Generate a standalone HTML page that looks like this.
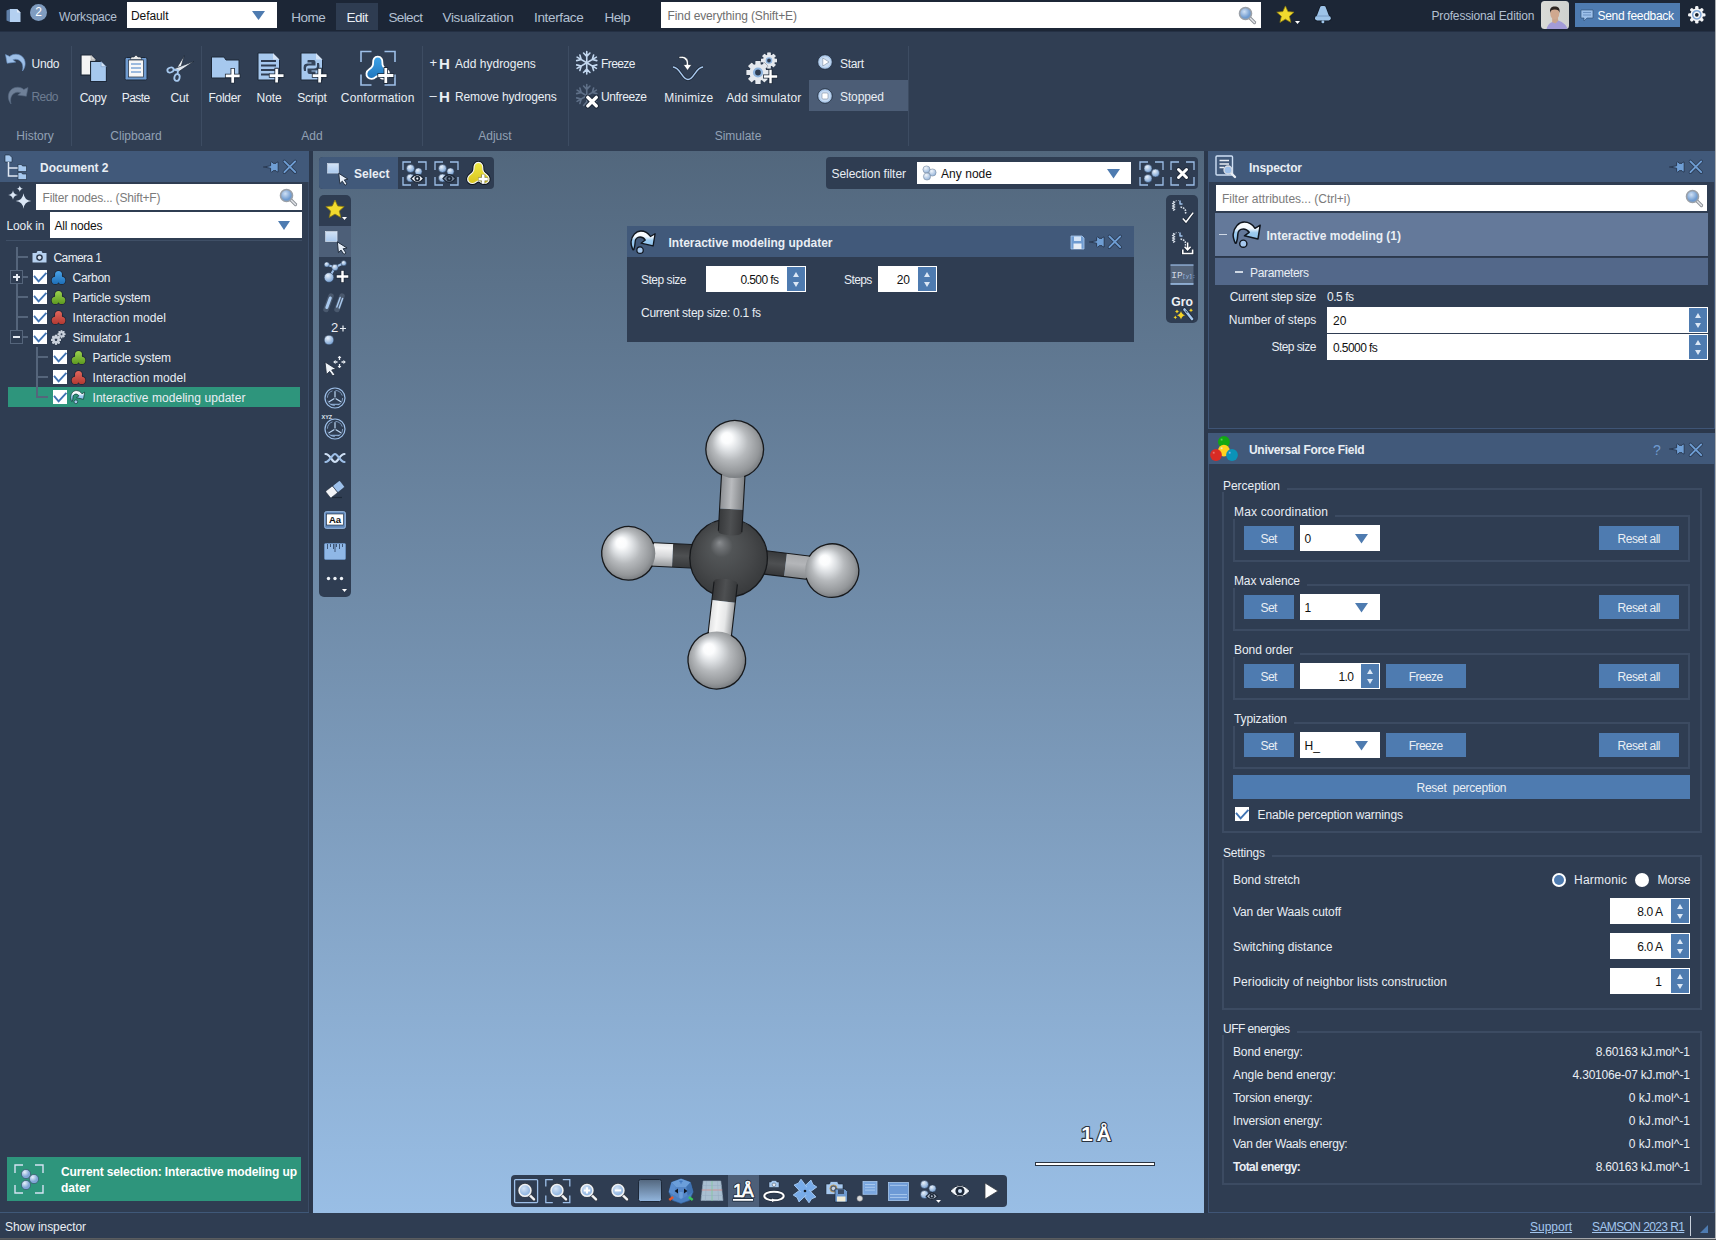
<!DOCTYPE html>
<html><head><meta charset="utf-8"><title>SAMSON</title><style>
*{margin:0;padding:0;box-sizing:border-box}
html,body{width:1716px;height:1240px;overflow:hidden;background:#2f3d52}
body{font-family:"Liberation Sans",sans-serif;font-size:12px;position:relative}
div,svg{position:absolute}
svg{overflow:visible}
</style></head><body>
<div style="left:0px;top:0px;width:1716px;height:31px;background:#1c2636;box-shadow:0 1px 1px #243044;"></div>
<svg style="left:6px;top:8px;" width="16" height="15" viewBox="0 0 16 15"><path d="M0.5 2.5 L4 1 L4 14 L0.5 12.5Z" fill="#5f7fa8"/><path d="M4 1 H11 L14.5 4.5 V14 H4Z" fill="#b4d0f0"/><path d="M11 1 V4.5 H14.5Z" fill="#dfeaf7"/></svg>
<div style="left:30px;top:3.6px;width:17px;height:17px;background:#7f9cc0;border-radius:50%;"></div>
<div style="left:35.16px;top:4.44px;line-height:16px;font-size:12px;color:#fff;white-space:pre;">2</div>
<div style="left:59.00px;top:8.94px;line-height:16px;font-size:12px;color:#b3c0d2;white-space:pre;letter-spacing:-0.225px;">Workspace</div>
<div style="left:127px;top:2px;width:150px;height:26px;background:#fff;"></div>
<div style="left:131.00px;top:8.44px;line-height:16px;font-size:12px;color:#111;white-space:pre;letter-spacing:-0.087px;">Default</div>
<svg style="left:252px;top:11px;" width="13" height="9" viewBox="0 0 13 9"><path d="M0 0 H13 L6.5 9Z" fill="#4e7bb0"/></svg>
<div style="left:336px;top:3px;width:42px;height:27px;background:#2e3c51;"></div>
<div style="left:291.30px;top:10.06px;line-height:16px;font-size:13.5px;color:#b3c0d2;white-space:pre;letter-spacing:-0.537px;">Home</div>
<div style="left:346.40px;top:10.06px;line-height:16px;font-size:13.5px;color:#e9eef4;white-space:pre;letter-spacing:-0.487px;">Edit</div>
<div style="left:388.40px;top:10.06px;line-height:16px;font-size:13.5px;color:#b3c0d2;white-space:pre;letter-spacing:-0.600px;">Select</div>
<div style="left:442.50px;top:10.06px;line-height:16px;font-size:13.5px;color:#b3c0d2;white-space:pre;letter-spacing:-0.354px;">Visualization</div>
<div style="left:534.10px;top:10.06px;line-height:16px;font-size:13.5px;color:#b3c0d2;white-space:pre;letter-spacing:-0.366px;">Interface</div>
<div style="left:604.50px;top:10.06px;line-height:16px;font-size:13.5px;color:#b3c0d2;white-space:pre;letter-spacing:-0.600px;">Help</div>
<div style="left:661px;top:2px;width:600px;height:26px;background:#fff;"></div>
<div style="left:667.60px;top:8.44px;line-height:16px;font-size:12px;color:#6f6f6f;white-space:pre;letter-spacing:-0.125px;">Find everything (Shift+E)</div>
<svg style="left:1238px;top:6px;" width="18" height="18" viewBox="0 0 18 18"><defs><radialGradient id="mg1238" cx="40%" cy="35%"><stop offset="0" stop-color="#cfe0f5"/><stop offset="1" stop-color="#6f9bd0"/></radialGradient></defs><path d="M11.5 11.5 L16.5 16.5" stroke="#8a8f96" stroke-width="3.2" stroke-linecap="round"/><path d="M11.5 11.5 L16.5 16.5" stroke="#e3e6ea" stroke-width="1.4" stroke-linecap="round"/><circle cx="7.5" cy="7.5" r="6" fill="url(#mg1238)" stroke="#9aa0a8" stroke-width="1.6"/></svg>
<svg style="left:1275.5px;top:4.9px;" width="18.8" height="18.8" viewBox="0 0 20 20"><path d="M10 1 L12.7 7 L19.2 7.6 L14.3 12 L15.8 18.5 L10 15.1 L4.2 18.5 L5.7 12 L0.8 7.6 L7.3 7Z" fill="#f1da2e" stroke="#8a7a10" stroke-width="0.8" stroke-linejoin="round"/></svg>
<svg style="left:1294.8px;top:20.8px;" width="5" height="3" viewBox="0 0 5 3"><path d="M0 0 H5 L2.5 3Z" fill="#fff"/></svg>
<svg style="left:1314px;top:5px;" width="18" height="20" viewBox="0 0 18 20"><g stroke="#121a27" stroke-width="1.6" stroke-linejoin="round"><path d="M5.9 2.8 Q6.1 1 7.6 1 H10.2 Q11.7 1 11.9 2.8 L15 11 H2.8Z"/><rect x="1" y="11" width="15.8" height="4.4" rx="2.1"/><rect x="7.5" y="15.4" width="2.8" height="2.8" rx="1"/></g><g fill="#9dc3e8"><path d="M5.9 2.8 Q6.1 1 7.6 1 H10.2 Q11.7 1 11.9 2.8 L15 11 H2.8Z"/><rect x="1" y="11" width="15.8" height="4.4" rx="2.1"/><rect x="7.5" y="15.6" width="2.8" height="2.6" rx="1"/></g><path d="M2.6 11 H15.2" stroke="#6f93bd" stroke-width=".8"/></svg>
<div style="left:1431.50px;top:8.44px;line-height:16px;font-size:12px;color:#b3c0d2;white-space:pre;letter-spacing:-0.161px;">Professional Edition</div>
<svg style="left:1541px;top:1px;" width="28" height="28" viewBox="0 0 28 28"><defs><clipPath id="avc"><rect width="28" height="28" rx="3.5"/></clipPath><linearGradient id="avb" x1="0" y1="0" x2="1" y2="0"><stop offset="0" stop-color="#d9dad7"/><stop offset="1" stop-color="#cfd1ce"/></linearGradient></defs><g clip-path="url(#avc)"><rect width="28" height="28" fill="url(#avb)"/><path d="M5.5 28 C7 23 10 21.2 13 20.6 L17.5 19.5 C22 21.5 25.5 24 26.5 28Z" fill="#a29bd8"/><path d="M11.2 17 L11.2 21.2 L14.5 22.6 L17.2 19.8 L16.8 16Z" fill="#c9a48c"/><ellipse cx="13.8" cy="12.6" rx="4.5" ry="5.7" fill="#cfa88f"/><path d="M9.2 12 C8.4 7 10.6 5.6 13.8 5.6 C17 5.6 19.3 7 18.5 12 C18 9.6 16.8 8.6 13.8 8.6 C10.8 8.6 9.7 9.6 9.2 12Z" fill="#2e2622"/></g></svg>
<div style="left:1574.6px;top:3px;width:105.5px;height:24px;background:#4e7bb0;"></div>
<svg style="left:1580px;top:8.8px;" width="14" height="13" viewBox="0 0 14 13"><path d="M1 1 H13 V9 H7 L4 12 V9 H1Z" fill="#9cc0ea" stroke="#2d4a70" stroke-width="0.6"/><path d="M3 3.5 H11 M3 6 H11" stroke="#5f86b8" stroke-width="0.8"/></svg>
<div style="left:1597.50px;top:8.44px;line-height:16px;font-size:12px;color:#fff;white-space:pre;letter-spacing:-0.297px;">Send feedback</div>
<svg style="left:1688.2px;top:6.1px;" width="17.6" height="17.6" viewBox="0 0 20 20"><g transform="translate(10 10)"><rect x="-1.9" y="-9.9" width="3.8" height="4.4" rx="1.5" transform="rotate(0)" fill="#f4f5f7"/><rect x="-1.9" y="-9.9" width="3.8" height="4.4" rx="1.5" transform="rotate(45)" fill="#f4f5f7"/><rect x="-1.9" y="-9.9" width="3.8" height="4.4" rx="1.5" transform="rotate(90)" fill="#f4f5f7"/><rect x="-1.9" y="-9.9" width="3.8" height="4.4" rx="1.5" transform="rotate(135)" fill="#f4f5f7"/><rect x="-1.9" y="-9.9" width="3.8" height="4.4" rx="1.5" transform="rotate(180)" fill="#f4f5f7"/><rect x="-1.9" y="-9.9" width="3.8" height="4.4" rx="1.5" transform="rotate(225)" fill="#f4f5f7"/><rect x="-1.9" y="-9.9" width="3.8" height="4.4" rx="1.5" transform="rotate(270)" fill="#f4f5f7"/><rect x="-1.9" y="-9.9" width="3.8" height="4.4" rx="1.5" transform="rotate(315)" fill="#f4f5f7"/><circle r="7.3" fill="#f4f5f7"/><circle r="4.7" fill="none" stroke="#7fa6d6" stroke-width="1.7"/><circle r="2.1" fill="#16202f"/></g></svg>
<div style="left:0px;top:32px;width:1716px;height:119px;background:#303e53;"></div>
<div style="left:71px;top:46px;width:1px;height:100px;background:#3d4c62;"></div>
<div style="left:201px;top:46px;width:1px;height:100px;background:#3d4c62;"></div>
<div style="left:422px;top:46px;width:1px;height:100px;background:#3d4c62;"></div>
<div style="left:568px;top:46px;width:1px;height:100px;background:#3d4c62;"></div>
<div style="left:908px;top:46px;width:1px;height:100px;background:#3d4c62;"></div>
<svg style="left:5.3px;top:52.8px;" width="22.5" height="19.3" viewBox="0 0 21 18"><g ><path d="M0.5 1.5 L2 9.5 L10 8.5 L7.3 6.3 C11 4.8 14.8 6.8 16.2 10.2 C17 12.6 16.8 14.8 16.3 16.8 C19.8 12.5 19.6 6.6 16 3.3 C12.4 0.3 7.4 0.6 4.4 3.3Z" fill="#9ec0e8" stroke="#6d95c6" stroke-width="0.6"/></g></svg>
<div style="left:31.50px;top:56.44px;line-height:16px;font-size:12px;color:#e9eef4;white-space:pre;letter-spacing:-0.229px;">Undo</div>
<svg style="left:5.8px;top:86.3px;" width="22.5" height="19.3" viewBox="0 0 21 18"><g transform="translate(21 0) scale(-1 1)"><path d="M0.5 1.5 L2 9.5 L10 8.5 L7.3 6.3 C11 4.8 14.8 6.8 16.2 10.2 C17 12.6 16.8 14.8 16.3 16.8 C19.8 12.5 19.6 6.6 16 3.3 C12.4 0.3 7.4 0.6 4.4 3.3Z" fill="#6f8098" stroke="#56677e" stroke-width="0.6"/></g></svg>
<div style="left:31.50px;top:89.44px;line-height:16px;font-size:12px;color:#6d7c91;white-space:pre;letter-spacing:-0.600px;">Redo</div>
<div style="left:16.33px;top:128.44px;line-height:16px;font-size:12px;color:#92a1b5;white-space:pre;">History</div>
<svg style="left:79.5px;top:54px;" width="28.5" height="28.5" viewBox="0 0 27 27"><path d="M1 1 H10.5 L15 5.5 V20 H1Z" fill="#f4f4f4" stroke="#1d2838" stroke-width="1"/><path d="M10.5 1 V5.5 H15" fill="#d6d6d6" stroke="#999" stroke-width=".5"/><path d="M10 7 H20 L25 12 V26 H10Z" fill="#a6c8ee" stroke="#1d2838" stroke-width="1"/><path d="M20 7 V12 H25Z" fill="#d3e3f6" stroke="#6f93bf" stroke-width=".5"/></svg>
<div style="left:79.70px;top:90.14px;line-height:16px;font-size:12px;color:#e9eef4;white-space:pre;letter-spacing:-0.338px;">Copy</div>
<svg style="left:124px;top:54px;" width="24" height="27" viewBox="0 0 24 27"><rect x="1" y="3.5" width="22" height="22.5" rx="1.5" fill="#6f9bd0" stroke="#1d2838" stroke-width="1"/><rect x="4.5" y="6" width="15" height="17" fill="#f7f7f7" stroke="#1d2838" stroke-width=".7"/><path d="M6 5.5 L7.5 3 H10 L12 1 L14 3 H16.5 L18 5.5Z" fill="#e9e9e9" stroke="#1d2838" stroke-width=".6"/><path d="M7 10 H17 M7 14 H17 M7 18 H17" stroke="#7fa6d6" stroke-width="1.4"/></svg>
<div style="left:121.86px;top:90.14px;line-height:16px;font-size:12px;color:#e9eef4;white-space:pre;letter-spacing:-0.600px;">Paste</div>
<svg style="left:165.5px;top:54.5px;" width="29" height="27" viewBox="0 0 29 27"><path d="M18.3 0.5 L13.6 17 L10.6 13.2 Z" fill="#eef1f5" stroke="#1d2838" stroke-width=".7" stroke-linejoin="round"/><path d="M28 6.3 L8.6 13.6 L11.8 17.3Z" fill="#dfe5ec" stroke="#1d2838" stroke-width=".7" stroke-linejoin="round"/><ellipse cx="4.5" cy="15" rx="3.2" ry="2.4" transform="rotate(-20 4.5 15)" fill="none" stroke="#a6c8ee" stroke-width="1.8"/><ellipse cx="11" cy="22.5" rx="2.6" ry="3.4" transform="rotate(15 11 22.5)" fill="none" stroke="#a6c8ee" stroke-width="1.8"/><path d="M7.5 14.5 L12 15.5 L11.5 19.5" fill="none" stroke="#a6c8ee" stroke-width="1.8"/></svg>
<div style="left:170.45px;top:90.14px;line-height:16px;font-size:12px;color:#e9eef4;white-space:pre;letter-spacing:-0.087px;">Cut</div>
<div style="left:110.32px;top:128.44px;line-height:16px;font-size:12px;color:#92a1b5;white-space:pre;">Clipboard</div>
<svg style="left:209px;top:53.5px;" width="32" height="30" viewBox="0 0 32 30"><path d="M2.5 3 H15 L17 6 H30 V24 H2.5Z" fill="#a6c8ee" stroke="#1d2838" stroke-width="1"/><path d="M18.1 21.8 H29.299999999999997 M23.7 16.200000000000003 V27.4" stroke="#1d2838" stroke-width="4.300000000000001" stroke-linecap="square"/><path d="M18.1 21.8 H29.299999999999997 M23.7 16.200000000000003 V27.4" stroke="#fff" stroke-width="2.7" stroke-linecap="square"/></svg>
<div style="left:208.55px;top:90.14px;line-height:16px;font-size:12px;color:#e9eef4;white-space:pre;letter-spacing:-0.303px;">Folder</div>
<svg style="left:255.8px;top:52.3px;" width="28" height="31" viewBox="0 0 28 31"><path d="M2 1 H17 L23.5 7.5 V28 H2Z" fill="#a6c8ee" stroke="#1d2838" stroke-width="1"/><path d="M17 1 V7.5 H23.5Z" fill="#d5e4f6"/><path d="M5 9 H20 M5 13.5 H20 M5 18 H20 M5 22.5 H14" stroke="#2f3d52" stroke-width="2"/><path d="M15.000000000000002 23.6 H26.200000000000003 M20.6 18.0 V29.200000000000003" stroke="#1d2838" stroke-width="4.300000000000001" stroke-linecap="square"/><path d="M15.000000000000002 23.6 H26.200000000000003 M20.6 18.0 V29.200000000000003" stroke="#fff" stroke-width="2.7" stroke-linecap="square"/></svg>
<div style="left:256.60px;top:90.14px;line-height:16px;font-size:12px;color:#e9eef4;white-space:pre;letter-spacing:-0.116px;">Note</div>
<svg style="left:298.8px;top:52.3px;" width="28" height="31" viewBox="0 0 28 31"><path d="M2 1 H17 L23.5 7.5 V28 H2Z" fill="#a6c8ee" stroke="#1d2838" stroke-width="1"/><path d="M17 1 V7.5 H23.5Z" fill="#d5e4f6"/><path d="M9 8 H14.5 Q16.5 8 16.5 10 V13.5 H10 Q7 13.5 7 16 V19 H5 Q4 16 5 13 Q6 11.5 8.5 11.5 H12.5 V10.5 H8.5 V9 Q8.5 8 9 8Z M16 22 H10.5 Q8.5 22 8.5 20 V16.5 H15 Q18 16.5 18 14 V11 H20 Q21 14 20 17 Q19 18.5 16.5 18.5 H12.5 V19.5 H16.5 V21 Q16.5 22 16 22Z" fill="#34445b"/><path d="M15.000000000000002 23.6 H26.200000000000003 M20.6 18.0 V29.200000000000003" stroke="#1d2838" stroke-width="4.300000000000001" stroke-linecap="square"/><path d="M15.000000000000002 23.6 H26.200000000000003 M20.6 18.0 V29.200000000000003" stroke="#fff" stroke-width="2.7" stroke-linecap="square"/></svg>
<div style="left:297.25px;top:90.14px;line-height:16px;font-size:12px;color:#e9eef4;white-space:pre;letter-spacing:-0.235px;">Script</div>
<svg style="left:358.3px;top:50px;" width="38" height="36" viewBox="0 0 38 36"><path d="M3 12.0 V1.5 H13.5 M26.5 1.5 H37 V12.0 M37 24.5 V35 H26.5 M13.5 35 H3 V24.5" fill="none" stroke="#9dbfe8" stroke-width="1.6"/><defs><linearGradient id="cfg" x1="0" y1="0" x2="0" y2="1"><stop offset="0" stop-color="#3ea4ea"/><stop offset="1" stop-color="#1f74bb"/></linearGradient></defs><g transform="translate(7.3 5.3) scale(1.66)"><path d="M7.5 0.8 C9.6 0.8 10.4 2.6 10.3 4.4 C10.2 6.2 11 7.4 12.6 8.4 C14.6 9.7 14.8 12 13.5 13.3 C12.2 14.6 10 14.5 8.8 13.2 C8 12.4 7 12.4 6.2 13.2 C5 14.5 2.8 14.6 1.5 13.3 C0.2 12 0.4 9.7 2.4 8.4 C4 7.4 4.8 6.2 4.7 4.4 C4.6 2.6 5.4 0.8 7.5 0.8Z" fill="url(#cfg)" stroke="#fff" stroke-width="1.1"/></g><path d="M21.6 25.5 H34.0 M27.8 19.3 V31.7" stroke="#1d2838" stroke-width="4.4" stroke-linecap="square"/><path d="M21.6 25.5 H34.0 M27.8 19.3 V31.7" stroke="#fff" stroke-width="2.8" stroke-linecap="square"/></svg>
<div style="left:340.85px;top:90.14px;line-height:16px;font-size:12px;color:#e9eef4;white-space:pre;letter-spacing:0.133px;">Conformation</div>
<div style="left:301.32px;top:128.44px;line-height:16px;font-size:12px;color:#92a1b5;white-space:pre;">Add</div>
<div style="left:429.50px;top:54.95px;line-height:16px;font-size:13px;color:#e9eef4;white-space:pre;">+</div>
<div style="left:439.00px;top:55.97px;line-height:16px;font-size:15px;color:#e9eef4;white-space:pre;font-weight:bold;">H</div>
<div style="left:455.10px;top:56.44px;line-height:16px;font-size:12px;color:#e9eef4;white-space:pre;">Add hydrogens</div>
<div style="left:429.50px;top:87.95px;line-height:16px;font-size:13px;color:#e9eef4;white-space:pre;">–</div>
<div style="left:439.00px;top:88.97px;line-height:16px;font-size:15px;color:#e9eef4;white-space:pre;font-weight:bold;">H</div>
<div style="left:455.10px;top:89.44px;line-height:16px;font-size:12px;color:#e9eef4;white-space:pre;letter-spacing:-0.157px;">Remove hydrogens</div>
<div style="left:478.22px;top:128.44px;line-height:16px;font-size:12px;color:#92a1b5;white-space:pre;">Adjust</div>
<svg style="left:573.5px;top:50px;" width="25.5" height="25.5" viewBox="0 0 24 24"><g transform="translate(12 12)"><g transform="rotate(0)"><path d="M0 0 V-10.5 M0 -6 L-3 -9.2 M0 -6 L3 -9.2" stroke="#c3d8f0" stroke-width="1.5" fill="none" stroke-linecap="round"/></g><g transform="rotate(60)"><path d="M0 0 V-10.5 M0 -6 L-3 -9.2 M0 -6 L3 -9.2" stroke="#c3d8f0" stroke-width="1.5" fill="none" stroke-linecap="round"/></g><g transform="rotate(120)"><path d="M0 0 V-10.5 M0 -6 L-3 -9.2 M0 -6 L3 -9.2" stroke="#c3d8f0" stroke-width="1.5" fill="none" stroke-linecap="round"/></g><g transform="rotate(180)"><path d="M0 0 V-10.5 M0 -6 L-3 -9.2 M0 -6 L3 -9.2" stroke="#c3d8f0" stroke-width="1.5" fill="none" stroke-linecap="round"/></g><g transform="rotate(240)"><path d="M0 0 V-10.5 M0 -6 L-3 -9.2 M0 -6 L3 -9.2" stroke="#c3d8f0" stroke-width="1.5" fill="none" stroke-linecap="round"/></g><g transform="rotate(300)"><path d="M0 0 V-10.5 M0 -6 L-3 -9.2 M0 -6 L3 -9.2" stroke="#c3d8f0" stroke-width="1.5" fill="none" stroke-linecap="round"/></g></g></svg>
<div style="left:601.00px;top:56.44px;line-height:16px;font-size:12px;color:#e9eef4;white-space:pre;letter-spacing:-0.600px;">Freeze</div>
<svg style="left:573.5px;top:83px;" width="25.5" height="25.5" viewBox="0 0 24 24"><g transform="translate(12 12)"><g transform="rotate(0)"><path d="M0 0 V-10.5 M0 -6 L-3 -9.2 M0 -6 L3 -9.2" stroke="#5f7088" stroke-width="1.5" fill="none" stroke-linecap="round"/></g><g transform="rotate(60)"><path d="M0 0 V-10.5 M0 -6 L-3 -9.2 M0 -6 L3 -9.2" stroke="#5f7088" stroke-width="1.5" fill="none" stroke-linecap="round"/></g><g transform="rotate(120)"><path d="M0 0 V-10.5 M0 -6 L-3 -9.2 M0 -6 L3 -9.2" stroke="#5f7088" stroke-width="1.5" fill="none" stroke-linecap="round"/></g><g transform="rotate(180)"><path d="M0 0 V-10.5 M0 -6 L-3 -9.2 M0 -6 L3 -9.2" stroke="#5f7088" stroke-width="1.5" fill="none" stroke-linecap="round"/></g><g transform="rotate(240)"><path d="M0 0 V-10.5 M0 -6 L-3 -9.2 M0 -6 L3 -9.2" stroke="#5f7088" stroke-width="1.5" fill="none" stroke-linecap="round"/></g><g transform="rotate(300)"><path d="M0 0 V-10.5 M0 -6 L-3 -9.2 M0 -6 L3 -9.2" stroke="#5f7088" stroke-width="1.5" fill="none" stroke-linecap="round"/></g></g><path d="M13 13.5 L21 21.5 M21 13.5 L13 21.5" stroke="#1d2838" stroke-width="5" stroke-linecap="round"/><path d="M13 13.5 L21 21.5 M21 13.5 L13 21.5" stroke="#fff" stroke-width="3.2" stroke-linecap="round"/></svg>
<div style="left:601.00px;top:89.44px;line-height:16px;font-size:12px;color:#e9eef4;white-space:pre;letter-spacing:-0.384px;">Unfreeze</div>
<svg style="left:670px;top:54px;" width="36" height="28" viewBox="0 0 36 28"><path d="M3 13 C10 13 12 25.5 18 25.5 C24 25.5 26 13 33 13" fill="none" stroke="#1d2838" stroke-width="3"/><path d="M3 13 C10 13 12 25.5 18 25.5 C24 25.5 26 13 33 13" fill="none" stroke="#a9c9ee" stroke-width="1.5"/><path d="M9 2.5 C14.5 1.5 18.5 3.5 18.5 9 V10.5 H21.8 L17.5 16.5 L13.2 10.5 H16.3 V9 C16.3 5.5 13.5 3.8 9 4.5Z" fill="#fff" stroke="#1d2838" stroke-width=".7"/></svg>
<div style="left:664.20px;top:90.14px;line-height:16px;font-size:12px;color:#e9eef4;white-space:pre;letter-spacing:0.237px;">Minimize</div>
<svg style="left:746.3px;top:52px;" width="36" height="34" viewBox="0 0 36 34"><g transform="translate(23 8.5)" fill="#e4e8ee" stroke="#1d2838" stroke-width=".5"><rect x="-1.76" y="-8.00" width="3.52" height="4.00" rx="0.5" transform="rotate(0.0)"/><rect x="-1.76" y="-8.00" width="3.52" height="4.00" rx="0.5" transform="rotate(45.0)"/><rect x="-1.76" y="-8.00" width="3.52" height="4.00" rx="0.5" transform="rotate(90.0)"/><rect x="-1.76" y="-8.00" width="3.52" height="4.00" rx="0.5" transform="rotate(135.0)"/><rect x="-1.76" y="-8.00" width="3.52" height="4.00" rx="0.5" transform="rotate(180.0)"/><rect x="-1.76" y="-8.00" width="3.52" height="4.00" rx="0.5" transform="rotate(225.0)"/><rect x="-1.76" y="-8.00" width="3.52" height="4.00" rx="0.5" transform="rotate(270.0)"/><rect x="-1.76" y="-8.00" width="3.52" height="4.00" rx="0.5" transform="rotate(315.0)"/><circle r="5.92"/></g><g transform="translate(23 8.5)"><g fill="#e4e8ee"><rect x="-1.76" y="-8.00" width="3.52" height="4.00" rx="0.5" transform="rotate(0.0)"/><rect x="-1.76" y="-8.00" width="3.52" height="4.00" rx="0.5" transform="rotate(45.0)"/><rect x="-1.76" y="-8.00" width="3.52" height="4.00" rx="0.5" transform="rotate(90.0)"/><rect x="-1.76" y="-8.00" width="3.52" height="4.00" rx="0.5" transform="rotate(135.0)"/><rect x="-1.76" y="-8.00" width="3.52" height="4.00" rx="0.5" transform="rotate(180.0)"/><rect x="-1.76" y="-8.00" width="3.52" height="4.00" rx="0.5" transform="rotate(225.0)"/><rect x="-1.76" y="-8.00" width="3.52" height="4.00" rx="0.5" transform="rotate(270.0)"/><rect x="-1.76" y="-8.00" width="3.52" height="4.00" rx="0.5" transform="rotate(315.0)"/></g><circle r="5.92" fill="#e4e8ee"/><circle r="2.60" fill="#2f3d52" stroke="#8fb4de" stroke-width="1.43"/></g><g transform="translate(12 20.5)" fill="#e4e8ee" stroke="#1d2838" stroke-width=".5"><rect x="-2.53" y="-11.50" width="5.06" height="5.75" rx="0.5" transform="rotate(0.0)"/><rect x="-2.53" y="-11.50" width="5.06" height="5.75" rx="0.5" transform="rotate(45.0)"/><rect x="-2.53" y="-11.50" width="5.06" height="5.75" rx="0.5" transform="rotate(90.0)"/><rect x="-2.53" y="-11.50" width="5.06" height="5.75" rx="0.5" transform="rotate(135.0)"/><rect x="-2.53" y="-11.50" width="5.06" height="5.75" rx="0.5" transform="rotate(180.0)"/><rect x="-2.53" y="-11.50" width="5.06" height="5.75" rx="0.5" transform="rotate(225.0)"/><rect x="-2.53" y="-11.50" width="5.06" height="5.75" rx="0.5" transform="rotate(270.0)"/><rect x="-2.53" y="-11.50" width="5.06" height="5.75" rx="0.5" transform="rotate(315.0)"/><circle r="8.51"/></g><g transform="translate(12 20.5)"><g fill="#e4e8ee"><rect x="-2.53" y="-11.50" width="5.06" height="5.75" rx="0.5" transform="rotate(0.0)"/><rect x="-2.53" y="-11.50" width="5.06" height="5.75" rx="0.5" transform="rotate(45.0)"/><rect x="-2.53" y="-11.50" width="5.06" height="5.75" rx="0.5" transform="rotate(90.0)"/><rect x="-2.53" y="-11.50" width="5.06" height="5.75" rx="0.5" transform="rotate(135.0)"/><rect x="-2.53" y="-11.50" width="5.06" height="5.75" rx="0.5" transform="rotate(180.0)"/><rect x="-2.53" y="-11.50" width="5.06" height="5.75" rx="0.5" transform="rotate(225.0)"/><rect x="-2.53" y="-11.50" width="5.06" height="5.75" rx="0.5" transform="rotate(270.0)"/><rect x="-2.53" y="-11.50" width="5.06" height="5.75" rx="0.5" transform="rotate(315.0)"/></g><circle r="8.51" fill="#e4e8ee"/><circle r="4.00" fill="#2f3d52" stroke="#8fb4de" stroke-width="2.20"/></g><path d="M19.0 24.5 H30.0 M24.5 19.0 V30.0" stroke="#1d2838" stroke-width="4.0" stroke-linecap="square"/><path d="M19.0 24.5 H30.0 M24.5 19.0 V30.0" stroke="#fff" stroke-width="2.4" stroke-linecap="square"/></svg>
<div style="left:726.20px;top:90.14px;line-height:16px;font-size:12px;color:#e9eef4;white-space:pre;letter-spacing:0.136px;">Add simulator</div>
<svg style="left:817px;top:54px;" width="16" height="16" viewBox="0 0 16 16"><circle cx="8" cy="8" r="7.3" fill="#a9c6e8" stroke="#1d2838" stroke-width=".8"/><circle cx="8" cy="8" r="5.6" fill="#c9dcf2"/><path d="M5.8 4 L12 8 L5.8 12Z" fill="#fff" stroke="#6a7a8e" stroke-width=".5"/></svg>
<div style="left:840.00px;top:56.44px;line-height:16px;font-size:12px;color:#e9eef4;white-space:pre;letter-spacing:-0.335px;">Start</div>
<div style="left:809px;top:80px;width:98.5px;height:31px;background:#4c5d76;"></div>
<svg style="left:817px;top:88px;" width="16" height="16" viewBox="0 0 16 16"><circle cx="8" cy="8" r="7.3" fill="#a9c6e8" stroke="#1d2838" stroke-width=".8"/><circle cx="8" cy="8" r="5.6" fill="#c9dcf2"/><rect x="5" y="5" width="6" height="6" rx="1" fill="#fff" stroke="#6a7a8e" stroke-width=".5"/></svg>
<div style="left:840.00px;top:89.44px;line-height:16px;font-size:12px;color:#e9eef4;white-space:pre;letter-spacing:-0.118px;">Stopped</div>
<div style="left:714.66px;top:128.44px;line-height:16px;font-size:12px;color:#92a1b5;white-space:pre;">Simulate</div>
<div style="left:0px;top:151px;width:1716px;height:1062px;background:#2b384c;"></div>
<div style="left:0px;top:151px;width:309px;height:1062px;background:#2f3d52;border-right:1px solid #3b4c66;"></div>
<div style="left:0px;top:151px;width:309px;height:31px;background:#41597a;"></div>
<div style="left:313px;top:151px;width:891px;height:1062px;background:linear-gradient(#52677d,#99bee5);"></div>
<div style="left:1208px;top:151px;width:507px;height:278px;background:#2f3d52;border:1px solid #3f5576;border-top:none;"></div>
<div style="left:1208px;top:151px;width:507px;height:31px;background:#41597a;"></div>
<div style="left:1208px;top:433px;width:507px;height:780px;background:#2f3d52;border:1px solid #3f5576;border-top:none;"></div>
<div style="left:1208px;top:433px;width:507px;height:31px;background:#41597a;"></div>
<div style="left:0px;top:1212px;width:309px;height:1px;background:#3f5878;"></div>
<div style="left:0px;top:1213px;width:1716px;height:27px;background:#2f3d52;"></div>
<div style="left:1715px;top:0px;width:1px;height:1240px;background:#a9adb1;"></div>
<div style="left:0px;top:1238px;width:1716px;height:1px;background:linear-gradient(90deg,#5a5c5f 0%,#5a5c5f 70%,#b9bcc0 99%);"></div>
<div style="left:0px;top:1239px;width:1716px;height:1px;background:#505458;"></div>
<svg style="left:4px;top:154px;" width="24" height="26" viewBox="0 0 24 26"><path d="M1 1 H5.5 L8 3.5 V8 H1Z" fill="#a6c8ee" stroke="#1d2838" stroke-width=".6"/><path d="M4.5 8 V22 H15 M4.5 14 H15" fill="none" stroke="#dfe8f3" stroke-width="1.5"/><path d="M14 10.5 H17.5 L18.5 12 H22.5 V17.5 H14Z M14 18.5 H17.5 L18.5 20 H22.5 V25.5 H14Z" fill="#a6c8ee" stroke="#1d2838" stroke-width=".6"/></svg>
<div style="left:40.00px;top:159.94px;line-height:16px;font-size:12px;color:#e9eef4;white-space:pre;font-weight:bold;letter-spacing:-0.020px;">Document 2</div>
<svg style="left:263px;top:160.9px;" width="16" height="12" viewBox="0 0 16 12"><path d="M0.3 6 L7.6 4.8 V1.8 L8.6 0.7 L10.2 2.3 H13 L14 1.1 H15.2 V10.9 H14 L13 9.7 H10.2 L8.6 11.3 L7.6 10.2 V7.2 Z" fill="#6f9ed4" stroke="#2a3a53" stroke-width="1" stroke-linejoin="round"/></svg>
<svg style="left:283.2px;top:160.2px;" width="13.6" height="13.6" viewBox="0 0 13.6 13.6"><path d="M1.4 1.4 L12.2 12.2 M12.2 1.4 L1.4 12.2" stroke="#2a3a53" stroke-width="3.4" stroke-linecap="round"/><path d="M1.4 1.4 L12.2 12.2 M12.2 1.4 L1.4 12.2" stroke="#6f9ed4" stroke-width="1.9" stroke-linecap="round"/></svg>
<svg style="left:7px;top:185px;" width="24" height="24" viewBox="0 0 24 24"><path d="M16.5 8.2 Q17.28 15.22 24.3 16 Q17.28 16.78 16.5 23.8 Q15.72 16.78 8.7 16 Q15.72 15.22 16.5 8.2Z M6 5.2 Q6.48 9.52 10.8 10 Q6.48 10.48 6 14.8 Q5.52 10.48 1.2000000000000002 10 Q5.52 9.52 6 5.2Z M12.8 0.5 Q13.13 3.4699999999999998 16.1 3.8 Q13.13 4.13 12.8 7.1 Q12.47 4.13 9.5 3.8 Q12.47 3.4699999999999998 12.8 0.5Z" fill="#dbe7f6"/></svg>
<div style="left:36px;top:184px;width:266px;height:26px;background:#fff;"></div>
<div style="left:42.50px;top:189.94px;line-height:16px;font-size:12px;color:#7b7b7b;white-space:pre;letter-spacing:-0.182px;">Filter nodes... (Shift+F)</div>
<svg style="left:279px;top:188px;" width="18" height="18" viewBox="0 0 18 18"><defs><radialGradient id="mg279" cx="40%" cy="35%"><stop offset="0" stop-color="#cfe0f5"/><stop offset="1" stop-color="#6f9bd0"/></radialGradient></defs><path d="M11.5 11.5 L16.5 16.5" stroke="#8a8f96" stroke-width="3.2" stroke-linecap="round"/><path d="M11.5 11.5 L16.5 16.5" stroke="#e3e6ea" stroke-width="1.4" stroke-linecap="round"/><circle cx="7.5" cy="7.5" r="6" fill="url(#mg279)" stroke="#9aa0a8" stroke-width="1.6"/></svg>
<div style="left:6.50px;top:218.44px;line-height:16px;font-size:12px;color:#e9eef4;white-space:pre;letter-spacing:-0.116px;">Look in</div>
<div style="left:50px;top:212px;width:252px;height:26px;background:#fff;"></div>
<div style="left:54.50px;top:218.44px;line-height:16px;font-size:12px;color:#111;white-space:pre;letter-spacing:-0.171px;">All nodes</div>
<svg style="left:278px;top:221px;" width="12" height="9" viewBox="0 0 12 9"><path d="M0 0 H12 L6.0 9Z" fill="#4e7bb0"/></svg>
<div style="left:6px;top:240px;width:296px;height:1px;background:#3f4f66;"></div>
<div style="left:8px;top:387px;width:292px;height:20px;background:#2e957c;"></div>
<div style="left:16px;top:247px;width:1.8px;height:91px;background:#55657b;"></div>
<div style="left:17px;top:256px;width:11px;height:1.8px;background:#55657b;"></div>
<div style="left:17px;top:276px;width:11px;height:1.8px;background:#55657b;"></div>
<div style="left:17px;top:296px;width:11px;height:1.8px;background:#55657b;"></div>
<div style="left:17px;top:316px;width:11px;height:1.8px;background:#55657b;"></div>
<div style="left:17px;top:336px;width:11px;height:1.8px;background:#55657b;"></div>
<div style="left:36px;top:347px;width:1.8px;height:51px;background:#55657b;"></div>
<div style="left:37px;top:356px;width:11px;height:1.8px;background:#55657b;"></div>
<div style="left:37px;top:376px;width:11px;height:1.8px;background:#55657b;"></div>
<div style="left:37px;top:396px;width:11px;height:1.8px;background:#55657b;"></div>
<svg style="left:31.7px;top:249.5px;" width="15" height="13" viewBox="0 0 15 13"><path d="M0.5 3 H4.5 L5.5 1 H9.5 L10.5 3 H14.5 V12.5 H0.5Z" fill="#b6d1f0"/><circle cx="7.5" cy="7.6" r="3.3" fill="#2f3d52"/><circle cx="7.5" cy="7.6" r="1.8" fill="#d8e6f6"/></svg>
<div style="left:53.50px;top:249.94px;line-height:16px;font-size:12px;color:#e9eef4;white-space:pre;letter-spacing:-0.598px;">Camera 1</div>
<div style="left:10.3px;top:270.3px;width:13px;height:13.6px;background:#2f3d52;border:1.5px solid #55657b;"></div>
<div style="left:13.3px;top:276.2px;width:7px;height:1.8px;background:#e6ebf2;"></div>
<div style="left:15.9px;top:273.5px;width:1.8px;height:7.2px;background:#e6ebf2;"></div>
<div style="left:33px;top:270px;width:14px;height:14px;background:#fff;"></div>
<svg style="left:33px;top:270px;" width="14" height="14" viewBox="0 0 14 14"><path d="M1 5.9 L5.6 11.3 L13.4 2.8" fill="none" stroke="#3f73b3" stroke-width="1.9"/></svg>
<svg style="left:51px;top:270px;" width="15" height="15" viewBox="0 0 15 15"><defs><linearGradient id="m4aa3e8" gradientUnits="userSpaceOnUse" x1="0" y1="1" x2="0" y2="14"><stop offset="0" stop-color="#4aa3e8"/><stop offset="1" stop-color="#1f6fb8"/></linearGradient></defs><g fill="#1b2433"><circle cx="7.5" cy="4.4" r="4.25"/><circle cx="4.3" cy="10.4" r="4.35"/><circle cx="10.7" cy="10.4" r="4.35"/><circle cx="7.5" cy="8.0" r="4.5"/></g><g fill="url(#m4aa3e8)"><circle cx="7.5" cy="4.4" r="3.5"/><circle cx="4.3" cy="10.4" r="3.6"/><circle cx="10.7" cy="10.4" r="3.6"/><circle cx="7.5" cy="8.0" r="3.75"/></g></svg>
<div style="left:72.50px;top:269.94px;line-height:16px;font-size:12px;color:#e9eef4;white-space:pre;letter-spacing:-0.271px;">Carbon</div>
<div style="left:33px;top:290px;width:14px;height:14px;background:#fff;"></div>
<svg style="left:33px;top:290px;" width="14" height="14" viewBox="0 0 14 14"><path d="M1 5.9 L5.6 11.3 L13.4 2.8" fill="none" stroke="#3f73b3" stroke-width="1.9"/></svg>
<svg style="left:51px;top:290px;" width="15" height="15" viewBox="0 0 15 15"><defs><linearGradient id="m9bd24d" gradientUnits="userSpaceOnUse" x1="0" y1="1" x2="0" y2="14"><stop offset="0" stop-color="#9bd24d"/><stop offset="1" stop-color="#5d9a22"/></linearGradient></defs><g fill="#1b2433"><circle cx="7.5" cy="4.4" r="4.25"/><circle cx="4.3" cy="10.4" r="4.35"/><circle cx="10.7" cy="10.4" r="4.35"/><circle cx="7.5" cy="8.0" r="4.5"/></g><g fill="url(#m9bd24d)"><circle cx="7.5" cy="4.4" r="3.5"/><circle cx="4.3" cy="10.4" r="3.6"/><circle cx="10.7" cy="10.4" r="3.6"/><circle cx="7.5" cy="8.0" r="3.75"/></g></svg>
<div style="left:72.50px;top:289.94px;line-height:16px;font-size:12px;color:#e9eef4;white-space:pre;letter-spacing:-0.239px;">Particle system</div>
<div style="left:33px;top:310px;width:14px;height:14px;background:#fff;"></div>
<svg style="left:33px;top:310px;" width="14" height="14" viewBox="0 0 14 14"><path d="M1 5.9 L5.6 11.3 L13.4 2.8" fill="none" stroke="#3f73b3" stroke-width="1.9"/></svg>
<svg style="left:51px;top:310px;" width="15" height="15" viewBox="0 0 15 15"><defs><linearGradient id="me0665c" gradientUnits="userSpaceOnUse" x1="0" y1="1" x2="0" y2="14"><stop offset="0" stop-color="#e0665c"/><stop offset="1" stop-color="#b23a33"/></linearGradient></defs><g fill="#1b2433"><circle cx="7.5" cy="4.4" r="4.25"/><circle cx="4.3" cy="10.4" r="4.35"/><circle cx="10.7" cy="10.4" r="4.35"/><circle cx="7.5" cy="8.0" r="4.5"/></g><g fill="url(#me0665c)"><circle cx="7.5" cy="4.4" r="3.5"/><circle cx="4.3" cy="10.4" r="3.6"/><circle cx="10.7" cy="10.4" r="3.6"/><circle cx="7.5" cy="8.0" r="3.75"/></g></svg>
<div style="left:72.50px;top:309.94px;line-height:16px;font-size:12px;color:#e9eef4;white-space:pre;letter-spacing:0.091px;">Interaction model</div>
<div style="left:10.3px;top:330.3px;width:13px;height:13.6px;background:#2f3d52;border:1.5px solid #55657b;"></div>
<div style="left:13.3px;top:336.2px;width:7px;height:1.8px;background:#e6ebf2;"></div>
<div style="left:33px;top:330px;width:14px;height:14px;background:#fff;"></div>
<svg style="left:33px;top:330px;" width="14" height="14" viewBox="0 0 14 14"><path d="M1 5.9 L5.6 11.3 L13.4 2.8" fill="none" stroke="#3f73b3" stroke-width="1.9"/></svg>
<svg style="left:51px;top:330px;" width="15" height="15" viewBox="0 0 15 15"><g transform="translate(10.5 4.2)" fill="#c9d1dc" stroke="#1d2838" stroke-width=".5"><rect x="-0.88" y="-4.00" width="1.76" height="2.00" rx="0.5" transform="rotate(0.0)"/><rect x="-0.88" y="-4.00" width="1.76" height="2.00" rx="0.5" transform="rotate(45.0)"/><rect x="-0.88" y="-4.00" width="1.76" height="2.00" rx="0.5" transform="rotate(90.0)"/><rect x="-0.88" y="-4.00" width="1.76" height="2.00" rx="0.5" transform="rotate(135.0)"/><rect x="-0.88" y="-4.00" width="1.76" height="2.00" rx="0.5" transform="rotate(180.0)"/><rect x="-0.88" y="-4.00" width="1.76" height="2.00" rx="0.5" transform="rotate(225.0)"/><rect x="-0.88" y="-4.00" width="1.76" height="2.00" rx="0.5" transform="rotate(270.0)"/><rect x="-0.88" y="-4.00" width="1.76" height="2.00" rx="0.5" transform="rotate(315.0)"/><circle r="2.96"/></g><g transform="translate(10.5 4.2)"><g fill="#c9d1dc"><rect x="-0.88" y="-4.00" width="1.76" height="2.00" rx="0.5" transform="rotate(0.0)"/><rect x="-0.88" y="-4.00" width="1.76" height="2.00" rx="0.5" transform="rotate(45.0)"/><rect x="-0.88" y="-4.00" width="1.76" height="2.00" rx="0.5" transform="rotate(90.0)"/><rect x="-0.88" y="-4.00" width="1.76" height="2.00" rx="0.5" transform="rotate(135.0)"/><rect x="-0.88" y="-4.00" width="1.76" height="2.00" rx="0.5" transform="rotate(180.0)"/><rect x="-0.88" y="-4.00" width="1.76" height="2.00" rx="0.5" transform="rotate(225.0)"/><rect x="-0.88" y="-4.00" width="1.76" height="2.00" rx="0.5" transform="rotate(270.0)"/><rect x="-0.88" y="-4.00" width="1.76" height="2.00" rx="0.5" transform="rotate(315.0)"/></g><circle r="2.96" fill="#c9d1dc"/><circle r="1.20" fill="#2f3d52" stroke="#c9d1dc" stroke-width="0.66"/></g><g transform="translate(5 9.8)" fill="#c9d1dc" stroke="#1d2838" stroke-width=".5"><rect x="-1.10" y="-5.00" width="2.20" height="2.50" rx="0.5" transform="rotate(0.0)"/><rect x="-1.10" y="-5.00" width="2.20" height="2.50" rx="0.5" transform="rotate(45.0)"/><rect x="-1.10" y="-5.00" width="2.20" height="2.50" rx="0.5" transform="rotate(90.0)"/><rect x="-1.10" y="-5.00" width="2.20" height="2.50" rx="0.5" transform="rotate(135.0)"/><rect x="-1.10" y="-5.00" width="2.20" height="2.50" rx="0.5" transform="rotate(180.0)"/><rect x="-1.10" y="-5.00" width="2.20" height="2.50" rx="0.5" transform="rotate(225.0)"/><rect x="-1.10" y="-5.00" width="2.20" height="2.50" rx="0.5" transform="rotate(270.0)"/><rect x="-1.10" y="-5.00" width="2.20" height="2.50" rx="0.5" transform="rotate(315.0)"/><circle r="3.70"/></g><g transform="translate(5 9.8)"><g fill="#c9d1dc"><rect x="-1.10" y="-5.00" width="2.20" height="2.50" rx="0.5" transform="rotate(0.0)"/><rect x="-1.10" y="-5.00" width="2.20" height="2.50" rx="0.5" transform="rotate(45.0)"/><rect x="-1.10" y="-5.00" width="2.20" height="2.50" rx="0.5" transform="rotate(90.0)"/><rect x="-1.10" y="-5.00" width="2.20" height="2.50" rx="0.5" transform="rotate(135.0)"/><rect x="-1.10" y="-5.00" width="2.20" height="2.50" rx="0.5" transform="rotate(180.0)"/><rect x="-1.10" y="-5.00" width="2.20" height="2.50" rx="0.5" transform="rotate(225.0)"/><rect x="-1.10" y="-5.00" width="2.20" height="2.50" rx="0.5" transform="rotate(270.0)"/><rect x="-1.10" y="-5.00" width="2.20" height="2.50" rx="0.5" transform="rotate(315.0)"/></g><circle r="3.70" fill="#c9d1dc"/><circle r="1.80" fill="#2f3d52" stroke="#c9d1dc" stroke-width="0.99"/></g></svg>
<div style="left:72.50px;top:329.94px;line-height:16px;font-size:12px;color:#e9eef4;white-space:pre;letter-spacing:-0.219px;">Simulator 1</div>
<div style="left:53px;top:350px;width:14px;height:14px;background:#fff;"></div>
<svg style="left:53px;top:350px;" width="14" height="14" viewBox="0 0 14 14"><path d="M1 5.9 L5.6 11.3 L13.4 2.8" fill="none" stroke="#3f73b3" stroke-width="1.9"/></svg>
<svg style="left:71px;top:350px;" width="15" height="15" viewBox="0 0 15 15"><defs><linearGradient id="m9bd24d" gradientUnits="userSpaceOnUse" x1="0" y1="1" x2="0" y2="14"><stop offset="0" stop-color="#9bd24d"/><stop offset="1" stop-color="#5d9a22"/></linearGradient></defs><g fill="#1b2433"><circle cx="7.5" cy="4.4" r="4.25"/><circle cx="4.3" cy="10.4" r="4.35"/><circle cx="10.7" cy="10.4" r="4.35"/><circle cx="7.5" cy="8.0" r="4.5"/></g><g fill="url(#m9bd24d)"><circle cx="7.5" cy="4.4" r="3.5"/><circle cx="4.3" cy="10.4" r="3.6"/><circle cx="10.7" cy="10.4" r="3.6"/><circle cx="7.5" cy="8.0" r="3.75"/></g></svg>
<div style="left:92.50px;top:349.94px;line-height:16px;font-size:12px;color:#e9eef4;white-space:pre;letter-spacing:-0.204px;">Particle system</div>
<div style="left:53px;top:370px;width:14px;height:14px;background:#fff;"></div>
<svg style="left:53px;top:370px;" width="14" height="14" viewBox="0 0 14 14"><path d="M1 5.9 L5.6 11.3 L13.4 2.8" fill="none" stroke="#3f73b3" stroke-width="1.9"/></svg>
<svg style="left:71px;top:370px;" width="15" height="15" viewBox="0 0 15 15"><defs><linearGradient id="me0665c" gradientUnits="userSpaceOnUse" x1="0" y1="1" x2="0" y2="14"><stop offset="0" stop-color="#e0665c"/><stop offset="1" stop-color="#b23a33"/></linearGradient></defs><g fill="#1b2433"><circle cx="7.5" cy="4.4" r="4.25"/><circle cx="4.3" cy="10.4" r="4.35"/><circle cx="10.7" cy="10.4" r="4.35"/><circle cx="7.5" cy="8.0" r="4.5"/></g><g fill="url(#me0665c)"><circle cx="7.5" cy="4.4" r="3.5"/><circle cx="4.3" cy="10.4" r="3.6"/><circle cx="10.7" cy="10.4" r="3.6"/><circle cx="7.5" cy="8.0" r="3.75"/></g></svg>
<div style="left:92.50px;top:369.94px;line-height:16px;font-size:12px;color:#e9eef4;white-space:pre;letter-spacing:0.091px;">Interaction model</div>
<div style="left:53px;top:390px;width:14px;height:14px;background:#fff;"></div>
<svg style="left:53px;top:390px;" width="14" height="14" viewBox="0 0 14 14"><path d="M1 5.9 L5.6 11.3 L13.4 2.8" fill="none" stroke="#3f73b3" stroke-width="1.9"/></svg>
<svg style="left:70.3px;top:389.7px;" width="15.600000000000001" height="14.56" viewBox="0 0 30 28"><defs><linearGradient id="ug70_389" x1="0" y1="0" x2="0" y2="1"><stop offset="0" stop-color="#ffffff"/><stop offset=".3" stop-color="#f4f9fe"/><stop offset=".5" stop-color="#9ccbf0"/><stop offset="1" stop-color="#86bce8"/></linearGradient></defs><path d="M3.3 22.3 C1.6 18.5 0.9 15.5 1.2 13.2 C2 6 6.8 1.1 12.2 1.1 C17 1.1 20.5 3.5 23 7.3 L28.2 4.2 L26 17.9 L12.4 14.8 L17.2 11.3 C15.6 9 13.6 7.9 11.3 7.9 C8 7.9 5.8 10.5 5.8 13.6 C5.7 16.2 5.2 19.2 4.3 22 Z" fill="url(#ug70_389)" stroke="#14423c" stroke-width="1.5" stroke-linejoin="round"/><circle cx="11.3" cy="22.7" r="3.6" fill="#a6c8ee" stroke="#14423c" stroke-width="1.4"/></svg>
<div style="left:92.50px;top:389.94px;line-height:16px;font-size:12px;color:#e9eef4;white-space:pre;letter-spacing:0.058px;">Interactive modeling updater</div>
<div style="left:7px;top:1157px;width:294px;height:44px;background:#2e957c;"></div>
<svg style="left:14px;top:1164px;" width="30" height="30" viewBox="0 0 30 30"><path d="M1 9 V1 H9 M21 1 H29 V9 M29 21 V29 H21 M9 29 H1 V21" fill="none" stroke="#d5e2f2" stroke-width="1.4"/><defs><radialGradient id="sg14" cx="35%" cy="30%"><stop offset="0" stop-color="#e8f1fb"/><stop offset="1" stop-color="#7fa6d6"/></radialGradient></defs><circle cx="12" cy="10" r="4.6" fill="url(#sg14)" stroke="#2c3d55" stroke-width=".5"/><circle cx="20" cy="15" r="4.6" fill="url(#sg14)" stroke="#2c3d55" stroke-width=".5"/><circle cx="12" cy="21" r="4.6" fill="url(#sg14)" stroke="#2c3d55" stroke-width=".5"/></svg>
<div style="left:61.00px;top:1164.44px;line-height:16px;font-size:12px;color:#fff;white-space:pre;font-weight:bold;letter-spacing:-0.115px;">Current selection: Interactive modeling up</div>
<div style="left:61.00px;top:1180.44px;line-height:16px;font-size:12px;color:#fff;white-space:pre;font-weight:bold;">dater</div>
<div style="left:5.00px;top:1219.44px;line-height:16px;font-size:12px;color:#e9eef4;white-space:pre;letter-spacing:-0.080px;">Show inspector</div>
<div style="left:1530.00px;top:1219.44px;line-height:16px;font-size:12px;color:#a3c6ee;white-space:pre;text-decoration:underline;">Support</div>
<div style="left:1592.00px;top:1219.44px;line-height:16px;font-size:12px;color:#a3c6ee;white-space:pre;letter-spacing:-0.600px;text-decoration:underline;">SAMSON 2023 R1</div>
<div style="left:1690px;top:1216px;width:1px;height:20px;background:#c9d1dc;"></div>
<svg style="left:1700px;top:1225px;" width="8" height="8" viewBox="0 0 8 8"><path d="M8 0 V8 H0Z" fill="#4e7bb0"/></svg>
<div style="left:319px;top:157px;width:175px;height:32px;background:#2f3d52;border-radius:4px;"></div>
<div style="left:319px;top:157px;width:79px;height:32px;background:#41597a;border-radius:4px 0 0 4px;"></div>
<svg style="left:327px;top:163px;" width="22.0" height="22.0" viewBox="0 0 22 22"><defs><linearGradient id="sq490" x1="0" y1="0" x2="0" y2="1"><stop offset="0" stop-color="#d3e3f6"/><stop offset="1" stop-color="#a9c9ee"/></linearGradient></defs><rect x="0.5" y="0.5" width="11" height="9.6" fill="url(#sq490)" stroke="#e6eef8" stroke-width=".5"/><path d="M11.8 10.4 L12.8 20.6 L15.3 18.2 L18 22.3 L20 21 L17.3 16.9 L21 16.2Z" fill="#e6eef8" stroke="#1d2838" stroke-width=".9" stroke-linejoin="round"/></svg>
<div style="left:354.00px;top:165.94px;line-height:16px;font-size:12px;color:#e9eef4;white-space:pre;font-weight:bold;letter-spacing:0.029px;">Select</div>
<svg style="left:402px;top:160.5px;" width="25" height="25" viewBox="0 0 25 25"><defs><radialGradient id="se402" cx="38%" cy="30%" r="75%"><stop offset="0" stop-color="#eaf2fb"/><stop offset="1" stop-color="#6f9bd0"/></radialGradient></defs><path d="M1 9 V1 H9 M16 1 H24 V9 M24 16 V24 H16 M9 24 H1 V16" fill="none" stroke="#9dbfe8" stroke-width="1.3"/><circle cx="8.5" cy="7.5" r="4" fill="url(#se402)" stroke="#2c3d55" stroke-width=".5"/><circle cx="16.5" cy="10.5" r="3.6" fill="url(#se402)" stroke="#2c3d55" stroke-width=".5"/><circle cx="8.5" cy="17" r="4" fill="url(#se402)" stroke="#2c3d55" stroke-width=".5"/><path d="M9.0 17.6 Q15.3 9.8 21.6 17.6 Q15.3 25.400000000000002 9.0 17.6Z" fill="#f2f5f9" stroke="#1d2838" stroke-width="1.2"/><circle cx="15.3" cy="17.6" r="2.808" fill="#1d2838"/><circle cx="15.3" cy="17.6" r="1.092" fill="#f2f5f9"/></svg>
<svg style="left:433.5px;top:160.5px;" width="25" height="25" viewBox="0 0 25 25"><defs><radialGradient id="se433" cx="38%" cy="30%" r="75%"><stop offset="0" stop-color="#eaf2fb"/><stop offset="1" stop-color="#6f9bd0"/></radialGradient></defs><path d="M1 9 V1 H9 M16 1 H24 V9 M24 16 V24 H16 M9 24 H1 V16" fill="none" stroke="#9dbfe8" stroke-width="1.3"/><circle cx="8.5" cy="7.5" r="4" fill="url(#se433)" stroke="#2c3d55" stroke-width=".5"/><circle cx="16.5" cy="10.5" r="3.6" fill="url(#se433)" stroke="#2c3d55" stroke-width=".5"/><circle cx="8.5" cy="17" r="4" fill="url(#se433)" stroke="#2c3d55" stroke-width=".5"/><path d="M9.0 17.6 Q15.3 9.8 21.6 17.6 Q15.3 25.400000000000002 9.0 17.6Z" fill="#74859b" stroke="#1d2838" stroke-width="1.2"/><circle cx="15.3" cy="17.6" r="2.808" fill="#1d2838"/><circle cx="15.3" cy="17.6" r="1.092" fill="#74859b"/></svg>
<svg style="left:466px;top:160.5px;" width="25" height="24" viewBox="0 0 25 24"><defs><linearGradient id="yb" x1="0" y1="0" x2="0" y2="1"><stop offset="0" stop-color="#f0ea45"/><stop offset="1" stop-color="#d9c41f"/></linearGradient></defs><g transform="translate(0.6 0.2) scale(1.57)"><path d="M7.5 0.8 C9.6 0.8 10.4 2.6 10.3 4.4 C10.2 6.2 11 7.4 12.6 8.4 C14.6 9.7 14.8 12 13.5 13.3 C12.2 14.6 10 14.5 8.8 13.2 C8 12.4 7 12.4 6.2 13.2 C5 14.5 2.8 14.6 1.5 13.3 C0.2 12 0.4 9.7 2.4 8.4 C4 7.4 4.8 6.2 4.7 4.4 C4.6 2.6 5.4 0.8 7.5 0.8Z" fill="none" stroke="#0e141d" stroke-width="1.9"/><path d="M7.5 0.8 C9.6 0.8 10.4 2.6 10.3 4.4 C10.2 6.2 11 7.4 12.6 8.4 C14.6 9.7 14.8 12 13.5 13.3 C12.2 14.6 10 14.5 8.8 13.2 C8 12.4 7 12.4 6.2 13.2 C5 14.5 2.8 14.6 1.5 13.3 C0.2 12 0.4 9.7 2.4 8.4 C4 7.4 4.8 6.2 4.7 4.4 C4.6 2.6 5.4 0.8 7.5 0.8Z" fill="url(#yb)" stroke="#f4f6f4" stroke-width=".75"/></g><path d="M12.4 18.2 H22 M17.2 13.4 V23" stroke="#1d2838" stroke-opacity=".55" stroke-width="4"/><path d="M12.6 18.2 H21.8 M17.2 13.6 V22.8" stroke="#fff" stroke-width="2.7"/></svg>
<div style="left:319px;top:195px;width:32px;height:402px;background:#2f3d52;border-radius:5px;"></div>
<div style="left:319px;top:226px;width:32px;height:31px;background:#4d5f78;"></div>
<svg style="left:325px;top:199px;" width="20" height="20" viewBox="0 0 20 20"><path d="M10 1 L12.7 7 L19.2 7.6 L14.3 12 L15.8 18.5 L10 15.1 L4.2 18.5 L5.7 12 L0.8 7.6 L7.3 7Z" fill="#f1da2e" stroke="#8a7a10" stroke-width="0.8" stroke-linejoin="round"/></svg>
<svg style="left:342px;top:217px;" width="5" height="3" viewBox="0 0 5 3"><path d="M0 0 H5 L2.5 3Z" fill="#fff"/></svg>
<svg style="left:324.5px;top:230.5px;" width="23.1" height="23.1" viewBox="0 0 22 22"><defs><linearGradient id="sq555" x1="0" y1="0" x2="0" y2="1"><stop offset="0" stop-color="#d3e3f6"/><stop offset="1" stop-color="#a9c9ee"/></linearGradient></defs><rect x="0.5" y="0.5" width="11" height="9.6" fill="url(#sq555)" stroke="#e6eef8" stroke-width=".5"/><path d="M11.8 10.4 L12.8 20.6 L15.3 18.2 L18 22.3 L20 21 L17.3 16.9 L21 16.2Z" fill="#e6eef8" stroke="#1d2838" stroke-width=".9" stroke-linejoin="round"/></svg>
<svg style="left:322.5px;top:259.5px;" width="26" height="24" viewBox="0 0 26 24"><defs><radialGradient id="aa259" cx="38%" cy="30%" r="75%"><stop offset="0" stop-color="#eaf2fb"/><stop offset="1" stop-color="#6f9bd0"/></radialGradient></defs><path d="M6 18 L12 7.5 L3.5 4.5 M12 7.5 L20.5 3" fill="none" stroke="#9dbfe8" stroke-width="2"/><circle cx="6" cy="17.5" r="4.8" fill="url(#aa259)" stroke="#2c3d55" stroke-width=".5"/><circle cx="12" cy="7.5" r="3.2" fill="url(#aa259)" stroke="#2c3d55" stroke-width=".5"/><circle cx="3.8" cy="4.5" r="2.6" fill="url(#aa259)" stroke="#2c3d55" stroke-width=".5"/><circle cx="20.8" cy="3.2" r="2.6" fill="url(#aa259)" stroke="#2c3d55" stroke-width=".5"/><path d="M14.9 16.5 H24.1 M19.5 11.9 V21.1" stroke="#1d2838" stroke-width="4.0" stroke-linecap="square"/><path d="M14.9 16.5 H24.1 M19.5 11.9 V21.1" stroke="#fff" stroke-width="2.4" stroke-linecap="square"/></svg>
<svg style="left:322px;top:291px;" width="26" height="24" viewBox="0 0 26 24"><g stroke-linecap="round"><path d="M9 5 L4 18.5" stroke="#4a596e" stroke-width="5.4"/><path d="M8.3 7 L4.8 16.5" stroke="#a9c9ee" stroke-width="3"/><path d="M20 5 L15 18.5" stroke="#4a596e" stroke-width="5.4"/><path d="M18.2 6.5 L14.8 16" stroke="#a9c9ee" stroke-width="1.4"/><path d="M20.6 7.4 L17.2 17" stroke="#a9c9ee" stroke-width="1.4"/></g></svg>
<svg style="left:322.5px;top:321px;" width="26" height="26" viewBox="0 0 26 26"><defs><radialGradient id="ch321" cx="38%" cy="30%" r="75%"><stop offset="0" stop-color="#eaf2fb"/><stop offset="1" stop-color="#6f9bd0"/></radialGradient></defs><circle cx="6" cy="19" r="4.8" fill="url(#ch321)" stroke="#2c3d55" stroke-width=".5"/><text x="8" y="11" font-size="13" fill="#e9eef4" font-family="Liberation Sans">2</text><path d="M17 7.5 H23 M20 4.5 V10.5" stroke="#e9eef4" stroke-width="1.2"/></svg>
<svg style="left:323px;top:355px;" width="24" height="22" viewBox="0 0 24 22"><path d="M2 7 L3.5 19.5 L6.6 16.4 L9.8 21 L11.8 19.6 L8.7 15 L13 14Z" fill="#eef2f7" stroke="#1d2838" stroke-width=".8" stroke-linejoin="round"/><path d="M16.5 1.5 V5 M16.5 9 V12.5 M11 7 H14.5 M18.5 7 H22" stroke="#eef2f7" stroke-width="1.3"/><path d="M15 3 L16.5 1.2 L18 3 M15 11 L16.5 12.8 L18 11 M12.5 5.5 L10.7 7 L12.5 8.5 M20.5 5.5 L22.3 7 L20.5 8.5" fill="none" stroke="#eef2f7" stroke-width="1"/></svg>
<svg style="left:324px;top:386.5px;" width="22" height="22" viewBox="0 0 22 22"><circle cx="11" cy="11" r="10" fill="none" stroke="#9dbfe8" stroke-width="1.2"/><circle cx="11" cy="11" r="7.6" fill="none" stroke="#9dbfe8" stroke-width=".7" stroke-dasharray="9 3"/><path d="M11 10 V4.5 M10 11.8 L5.5 14.5 M12 11.8 L16.5 14.5" stroke="#bcd6f2" stroke-width="1.2" stroke-linecap="round"/><path d="M6.5 17.3 H15.5" stroke="#9dbfe8" stroke-width="1"/></svg>
<div style="left:321.50px;top:408.86px;line-height:16px;font-size:5.5px;color:#dfe6ee;white-space:pre;font-weight:bold;">XYZ</div>
<svg style="left:324px;top:417.5px;" width="22" height="22" viewBox="0 0 22 22"><circle cx="11" cy="11" r="10" fill="none" stroke="#9dbfe8" stroke-width="1.2"/><circle cx="11" cy="11" r="7.6" fill="none" stroke="#9dbfe8" stroke-width=".7" stroke-dasharray="9 3"/><path d="M11 10 V4.5 M10 11.8 L5.5 14.5 M12 11.8 L16.5 14.5" stroke="#bcd6f2" stroke-width="1.2" stroke-linecap="round"/><path d="M6.5 17.3 H15.5" stroke="#9dbfe8" stroke-width="1"/></svg>
<svg style="left:324px;top:451px;" width="22" height="14" viewBox="0 0 22 14"><path d="M1.5 3 C6 3 8 11 11 11 C14 11 16 3 20.5 3" fill="none" stroke="#cfe0f5" stroke-width="2.2" stroke-linecap="round"/><path d="M1.5 11 C6 11 8 3 11 3 C14 3 16 11 20.5 11" fill="none" stroke="#9dbfe8" stroke-width="2.2" stroke-linecap="round"/></svg>
<svg style="left:324px;top:479px;" width="22" height="20" viewBox="0 0 22 20"><g transform="rotate(-38 11 10)"><rect x="2" y="6" width="9" height="8.5" rx="1" fill="#f2f4f7" stroke="#1d2838" stroke-width=".5"/><rect x="11" y="6" width="9" height="8.5" rx="1" fill="#9dc0ea" stroke="#1d2838" stroke-width=".5"/></g><path d="M8 18.5 H18" stroke="#1d2838" stroke-width="1.2"/></svg>
<svg style="left:324px;top:511px;" width="22" height="18" viewBox="0 0 22 18"><rect x="0.7" y="0.7" width="20.6" height="16.6" rx="1.5" fill="#5f86b8" stroke="#9dbfe8" stroke-width="1"/><rect x="2.6" y="3" width="16.8" height="11" fill="#fff" stroke="#1d2838" stroke-width=".6"/><text x="11" y="12.3" font-size="9.5" font-weight="bold" text-anchor="middle" fill="#111" font-family="Liberation Sans">Aa</text></svg>
<svg style="left:324px;top:542.5px;" width="22" height="17" viewBox="0 0 22 17"><rect x="0.5" y="0.5" width="21" height="16" rx="1" fill="#8fb7e6" stroke="#6f9bd0" stroke-width=".6"/><path d="M3.5 1 V6 M6.5 1 V4 M9.5 1 V6 M12.5 1 V4 M15.5 1 V6 M18.5 1 V4" stroke="#3d5576" stroke-width="1"/><path d="M11 1 V9" stroke="#3d5576" stroke-width="1"/></svg>
<svg style="left:326px;top:575.5px;" width="18" height="5" viewBox="0 0 18 5"><circle cx="2.5" cy="2.5" r="1.7" fill="#eef2f7"/><circle cx="9" cy="2.5" r="1.7" fill="#eef2f7"/><circle cx="15.5" cy="2.5" r="1.7" fill="#eef2f7"/></svg>
<svg style="left:342px;top:589px;" width="5" height="3" viewBox="0 0 5 3"><path d="M0 0 H5 L2.5 3Z" fill="#fff"/></svg>
<div style="left:826px;top:157px;width:372px;height:32px;background:#2f3d52;border-radius:4px;"></div>
<div style="left:831.50px;top:165.94px;line-height:16px;font-size:12px;color:#e9eef4;white-space:pre;letter-spacing:-0.058px;">Selection filter</div>
<div style="left:917px;top:162px;width:214px;height:22px;background:#fff;"></div>
<svg style="left:922px;top:165px;" width="15" height="16" viewBox="0 0 15 16"><defs><radialGradient id="an1" cx="38%" cy="30%" r="75%"><stop offset="0" stop-color="#f2f6fb"/><stop offset="1" stop-color="#8fb0d8"/></radialGradient></defs><circle cx="4.5" cy="4.5" r="3.6" fill="url(#an1)" stroke="#6a7c92" stroke-width=".5"/><circle cx="10.5" cy="7.5" r="3.6" fill="url(#an1)" stroke="#6a7c92" stroke-width=".5"/><circle cx="5" cy="11.5" r="3.6" fill="url(#an1)" stroke="#6a7c92" stroke-width=".5"/></svg>
<div style="left:941.00px;top:165.94px;line-height:16px;font-size:12px;color:#111;white-space:pre;letter-spacing:0.042px;">Any node</div>
<svg style="left:1106.5px;top:169px;" width="13" height="9.5" viewBox="0 0 13 9.5"><path d="M0 0 H13 L6.5 9.5Z" fill="#4e7bb0"/></svg>
<svg style="left:1138.5px;top:160.5px;" width="25" height="25" viewBox="0 0 25 25"><defs><radialGradient id="fs1" cx="38%" cy="30%" r="75%"><stop offset="0" stop-color="#eaf2fb"/><stop offset="1" stop-color="#6f9bd0"/></radialGradient></defs><path d="M1 9 V1 H9 M16 1 H24 V9 M24 16 V24 H16 M9 24 H1 V16" fill="none" stroke="#9dbfe8" stroke-width="1.3"/><circle cx="9" cy="7.5" r="4" fill="url(#fs1)" stroke="#2c3d55" stroke-width=".5"/><circle cx="16.5" cy="12" r="4" fill="url(#fs1)" stroke="#2c3d55" stroke-width=".5"/><circle cx="9" cy="17.5" r="4" fill="url(#fs1)" stroke="#2c3d55" stroke-width=".5"/></svg>
<svg style="left:1169.5px;top:160.5px;" width="25" height="25" viewBox="0 0 25 25"><path d="M1 9 V1 H9 M16 1 H24 V9 M24 16 V24 H16 M9 24 H1 V16" fill="none" stroke="#9dbfe8" stroke-width="1.3"/><path d="M8.5 8.5 L16.5 16.5 M16.5 8.5 L8.5 16.5" stroke="#1d2838" stroke-width="4.6" stroke-linecap="round"/><path d="M8.5 8.5 L16.5 16.5 M16.5 8.5 L8.5 16.5" stroke="#fff" stroke-width="3" stroke-linecap="round"/></svg>
<div style="left:1166px;top:195px;width:32px;height:128px;background:#2f3d52;border-radius:5px;"></div>
<svg style="left:1170px;top:198px;" width="24" height="26" viewBox="0 0 24 26"><g fill="none" stroke-linejoin="round"><path d="M3 3.2 l1.8 1.1 l-2.4 1.2 l2.4 1.2 l-2.4 1.2 l2.4 1.2 l-2.4 1.2 l2.4 1.2 l-1.8 1" stroke="#d5dde7" stroke-width="1.1"/><path d="M5.5 3 q3 -1 4 0" stroke="#c3cfdd" stroke-width=".8" stroke-dasharray="1 1"/><path d="M10 2.5 v3.5 h2.5" stroke="#9dbfe8" stroke-width="1.5"/><path d="M10.5 9 q3.5 0.5 5 3.5 q0.6 1.6 -0.2 3" stroke="#d5dde7" stroke-width="1.6" stroke-dasharray="1.6 1"/></g><path d="M12.8 20.6 L16 24 L23.2 14.6" fill="none" stroke="#1d2838" stroke-width="3"/><path d="M12.8 20.6 L16 24 L23.2 14.6" fill="none" stroke="#fff" stroke-width="1.5"/></svg>
<svg style="left:1170px;top:230px;" width="24" height="26" viewBox="0 0 24 26"><g fill="none" stroke-linejoin="round"><path d="M3 3.2 l1.8 1.1 l-2.4 1.2 l2.4 1.2 l-2.4 1.2 l2.4 1.2 l-2.4 1.2 l2.4 1.2 l-1.8 1" stroke="#d5dde7" stroke-width="1.1"/><path d="M5.5 3 q3 -1 4 0" stroke="#c3cfdd" stroke-width=".8" stroke-dasharray="1 1"/><path d="M10 2.5 v3.5 h2.5" stroke="#9dbfe8" stroke-width="1.5"/><path d="M10.5 9 q3.5 0.5 5 3.5 q0.6 1.6 -0.2 3" stroke="#d5dde7" stroke-width="1.6" stroke-dasharray="1.6 1"/></g><path d="M17.6 12.5 V19.5 M14.6 16.8 L17.6 19.8 L20.6 16.8 M12.8 19.5 V23.5 H22.6 V19.5" fill="none" stroke="#1d2838" stroke-width="3.2"/><path d="M17.6 12.5 V19.5 M14.6 16.8 L17.6 19.8 L20.6 16.8 M12.8 19.5 V23.5 H22.6 V19.5" fill="none" stroke="#fff" stroke-width="1.6"/></svg>
<svg style="left:1170px;top:263.5px;" width="24" height="22" viewBox="0 0 24 22"><rect x="0.5" y="1" width="23" height="19" fill="#55657b"/><path d="M0.5 1 H23.5" stroke="#9dbfe8" stroke-width="1.2"/><path d="M0.5 20 H23.5" stroke="#9dbfe8" stroke-width="1.6"/><text x="1.3" y="14.2" font-size="9.5" fill="#cfd7e1" font-family="Liberation Mono">IP</text><text x="12.3" y="13.8" font-size="5.6" fill="#9dbfe8" font-family="Liberation Mono">[y]:</text></svg>
<svg style="left:1169px;top:295px;" width="26" height="30" viewBox="0 0 26 30"><text x="13.2" y="11.3" font-size="12.2" font-weight="bold" text-anchor="middle" fill="#eef1f5" font-family="Liberation Sans">Gro</text><path d="M12 16.1 Q12.756 19.544 16.2 20.3 Q12.756 21.056 12 24.5 Q11.244 21.056 7.8 20.3 Q11.244 19.544 12 16.1Z M8 14.399999999999999 Q8.36 16.04 10 16.4 Q8.36 16.759999999999998 8 18.4 Q7.64 16.759999999999998 6 16.4 Q7.64 16.04 8 14.399999999999999Z M22 13.3 Q22.36 14.940000000000001 24 15.3 Q22.36 15.66 22 17.3 Q21.64 15.66 20 15.3 Q21.64 14.940000000000001 22 13.3Z M6.3 20.599999999999998 Q6.624 22.075999999999997 8.1 22.4 Q6.624 22.724 6.3 24.2 Q5.976 22.724 4.5 22.4 Q5.976 22.075999999999997 6.3 20.599999999999998Z" fill="#f5d327"/><path d="M15.5 14.5 L23 24" stroke="#1d2838" stroke-width="4.2" stroke-linecap="round"/><path d="M15.5 14.5 L23 24" stroke="#a6c8ee" stroke-width="2.6" stroke-linecap="round"/><path d="M16.6 15.7 L18.2 17.8" stroke="#1d2838" stroke-width="1"/></svg>
<div style="left:627px;top:226px;width:507px;height:116px;background:#2f3d52;"></div>
<div style="left:627px;top:226px;width:507px;height:31px;background:#41597a;"></div>
<svg style="left:629.5px;top:229.8px;" width="26.7" height="24.92" viewBox="0 0 30 28"><defs><linearGradient id="ug629_229" x1="0" y1="0" x2="0" y2="1"><stop offset="0" stop-color="#ffffff"/><stop offset=".3" stop-color="#f4f9fe"/><stop offset=".5" stop-color="#9ccbf0"/><stop offset="1" stop-color="#86bce8"/></linearGradient></defs><path d="M3.3 22.3 C1.6 18.5 0.9 15.5 1.2 13.2 C2 6 6.8 1.1 12.2 1.1 C17 1.1 20.5 3.5 23 7.3 L28.2 4.2 L26 17.9 L12.4 14.8 L17.2 11.3 C15.6 9 13.6 7.9 11.3 7.9 C8 7.9 5.8 10.5 5.8 13.6 C5.7 16.2 5.2 19.2 4.3 22 Z" fill="url(#ug629_229)" stroke="#10161f" stroke-width="1.5" stroke-linejoin="round"/><circle cx="11.3" cy="22.7" r="3.6" fill="#a6c8ee" stroke="#10161f" stroke-width="1.4"/></svg>
<div style="left:668.50px;top:235.44px;line-height:16px;font-size:12px;color:#e9eef4;white-space:pre;font-weight:bold;">Interactive modeling updater</div>
<svg style="left:1069.5px;top:234.5px;" width="15" height="15" viewBox="0 0 15 15"><path d="M1 1 H12 L14 3 V14 H1Z" fill="#6f9bd0" stroke="#a9c9ee" stroke-width=".8"/><rect x="4" y="1.5" width="7" height="4.5" fill="#d3e3f6"/><rect x="3.5" y="8.5" width="8" height="5.5" fill="#e8eef6"/></svg>
<svg style="left:1088.8px;top:235.8px;" width="16" height="12" viewBox="0 0 16 12"><path d="M0.3 6 L7.6 4.8 V1.8 L8.6 0.7 L10.2 2.3 H13 L14 1.1 H15.2 V10.9 H14 L13 9.7 H10.2 L8.6 11.3 L7.6 10.2 V7.2 Z" fill="#6f9ed4" stroke="#2a3a53" stroke-width="1" stroke-linejoin="round"/></svg>
<svg style="left:1108.2px;top:235.2px;" width="13.6" height="13.6" viewBox="0 0 13.6 13.6"><path d="M1.4 1.4 L12.2 12.2 M12.2 1.4 L1.4 12.2" stroke="#2a3a53" stroke-width="3.4" stroke-linecap="round"/><path d="M1.4 1.4 L12.2 12.2 M12.2 1.4 L1.4 12.2" stroke="#6f9ed4" stroke-width="1.9" stroke-linecap="round"/></svg>
<div style="left:641.00px;top:272.44px;line-height:16px;font-size:12px;color:#e9eef4;white-space:pre;letter-spacing:-0.482px;">Step size</div>
<div style="left:706px;top:266px;width:100px;height:26px;background:#fff;"></div>
<div style="left:787px;top:267px;width:18px;height:24px;background:#4e7bb0;"></div>
<svg style="left:793.0px;top:271.5px;" width="6" height="5" viewBox="0 0 6 5"><path d="M3 0 L6 5 H0Z" fill="#dbe7f5"/></svg>
<svg style="left:793.0px;top:281.5px;" width="6" height="5" viewBox="0 0 6 5"><path d="M3 5 L6 0 H0Z" fill="#dbe7f5"/></svg>
<div style="left:740.40px;top:271.94px;line-height:16px;font-size:12px;color:#111;white-space:pre;letter-spacing:-0.585px;">0.500 fs</div>
<div style="left:844.00px;top:272.44px;line-height:16px;font-size:12px;color:#e9eef4;white-space:pre;letter-spacing:-0.600px;">Steps</div>
<div style="left:878px;top:266px;width:59px;height:26px;background:#fff;"></div>
<div style="left:918px;top:267px;width:18px;height:24px;background:#4e7bb0;"></div>
<svg style="left:924.0px;top:271.5px;" width="6" height="5" viewBox="0 0 6 5"><path d="M3 0 L6 5 H0Z" fill="#dbe7f5"/></svg>
<svg style="left:924.0px;top:281.5px;" width="6" height="5" viewBox="0 0 6 5"><path d="M3 5 L6 0 H0Z" fill="#dbe7f5"/></svg>
<div style="left:896.65px;top:271.94px;line-height:16px;font-size:12px;color:#111;white-space:pre;">20</div>
<div style="left:641.00px;top:305.24px;line-height:16px;font-size:12px;color:#e9eef4;white-space:pre;letter-spacing:-0.280px;">Current step size: 0.1 fs</div>
<svg style="left:0px;top:0px;pointer-events:none;" width="1716" height="1240" viewBox="0 0 1716 1240"><defs><radialGradient id="hg" cx="50%" cy="50%" fx="34%" fy="27%" r="62%"><stop offset="0" stop-color="#ffffff"/><stop offset=".15" stop-color="#fbfcfd"/><stop offset=".31" stop-color="#dcdfe2"/><stop offset=".5" stop-color="#b6b9bc"/><stop offset=".75" stop-color="#94979a"/><stop offset=".92" stop-color="#6c7074"/><stop offset="1" stop-color="#5b5f63"/></radialGradient><radialGradient id="cg" cx="50%" cy="50%" fx="38%" fy="30%" r="60%"><stop offset="0" stop-color="#8a8d90"/><stop offset=".1" stop-color="#6f7275"/><stop offset=".24" stop-color="#525557"/><stop offset=".6" stop-color="#454749"/><stop offset=".9" stop-color="#37393b"/><stop offset="1" stop-color="#3f4650"/></radialGradient></defs><defs><linearGradient id="bLd" x1="0" y1="0" x2="0" y2="1"><stop offset="0" stop-color="#37393b"/><stop offset="0.5" stop-color="#4e5052"/><stop offset="1" stop-color="#363739"/></linearGradient><linearGradient id="bLl" x1="0" y1="0" x2="0" y2="1"><stop offset="0" stop-color="#94979a"/><stop offset="0.45" stop-color="#d6d7d9"/><stop offset="0.8" stop-color="#f3f3f4"/><stop offset="1" stop-color="#e2e3e4"/></linearGradient></defs><g transform="translate(728.6 558) rotate(-177.31)"><rect x="0.0" y="-11.75" width="56.1" height="23.5" fill="url(#bLd)"/><rect x="56.1" y="-11.75" width="44.1" height="23.5" fill="url(#bLl)"/><path d="M1.0 -11.75 H100.2 M1.0 11.75 H100.2" stroke="#17191c" stroke-width="1.1"/></g><defs><linearGradient id="bRd" x1="0" y1="0" x2="0" y2="1"><stop offset="0" stop-color="#37393b"/><stop offset="0.5" stop-color="#4e5052"/><stop offset="1" stop-color="#363739"/></linearGradient><linearGradient id="bRl" x1="0" y1="0" x2="0" y2="1"><stop offset="0" stop-color="#a6a8ab"/><stop offset="0.4" stop-color="#b4b6b9"/><stop offset="1" stop-color="#85888b"/></linearGradient></defs><g transform="translate(728.6 558) rotate(6.95)"><rect x="0.0" y="-11.75" width="57.3" height="23.5" fill="url(#bRd)"/><rect x="57.3" y="-11.75" width="46.9" height="23.5" fill="url(#bRl)"/><path d="M1.0 -11.75 H104.2 M1.0 11.75 H104.2" stroke="#17191c" stroke-width="1.1"/></g><circle cx="628.5" cy="553.3" r="26.8" fill="url(#hg)"/><circle cx="628.5" cy="553.3" r="26.8" fill="none" stroke="#17191c" stroke-width="1.3" stroke-dasharray="145.39 23.00" transform="rotate(27.27 628.5 553.3)"/><circle cx="832" cy="570.6" r="26.8" fill="url(#hg)"/><circle cx="832" cy="570.6" r="26.8" fill="none" stroke="#17191c" stroke-width="1.3" stroke-dasharray="145.39 23.00" transform="rotate(-148.47 832 570.6)"/><circle cx="728.6" cy="558" r="38.8" fill="url(#cg)" stroke="#17191c" stroke-width="1.3"/><defs><linearGradient id="bTd" x1="0" y1="0" x2="0" y2="1"><stop offset="0" stop-color="#37393b"/><stop offset="0.5" stop-color="#4e5052"/><stop offset="1" stop-color="#363739"/></linearGradient><linearGradient id="bTl" x1="0" y1="0" x2="0" y2="1"><stop offset="0" stop-color="#8c8f93"/><stop offset="0.45" stop-color="#b9bbbe"/><stop offset="1" stop-color="#7e8184"/></linearGradient></defs><g transform="translate(728.6 558) rotate(-86.79)"><ellipse cx="25.6" cy="0" rx="3" ry="11.75" fill="url(#bTd)"/><rect x="25.6" y="-11.75" width="23.4" height="23.5" fill="url(#bTd)"/><rect x="49.0" y="-11.75" width="59.9" height="23.5" fill="url(#bTl)"/><path d="M26.6 -11.75 H108.9 M26.6 11.75 H108.9" stroke="#17191c" stroke-width="1.1"/></g><defs><linearGradient id="bBd" x1="0" y1="0" x2="0" y2="1"><stop offset="0" stop-color="#37393b"/><stop offset="0.5" stop-color="#4e5052"/><stop offset="1" stop-color="#363739"/></linearGradient><linearGradient id="bBl" x1="0" y1="0" x2="0" y2="1"><stop offset="0" stop-color="#9a9da0"/><stop offset="0.35" stop-color="#e6e7e8"/><stop offset="0.7" stop-color="#f7f7f7"/><stop offset="1" stop-color="#dfe0e1"/></linearGradient></defs><g transform="translate(728.6 558) rotate(96.59)"><ellipse cx="24.2" cy="0" rx="3" ry="11.75" fill="url(#bBd)"/><rect x="24.2" y="-11.75" width="19.5" height="23.5" fill="url(#bBd)"/><rect x="43.7" y="-11.75" width="59.2" height="23.5" fill="url(#bBl)"/><path d="M25.2 -11.75 H102.9 M25.2 11.75 H102.9" stroke="#17191c" stroke-width="1.1"/></g><circle cx="734.7" cy="449.3" r="28.8" fill="url(#hg)"/><circle cx="734.7" cy="449.3" r="28.8" fill="none" stroke="#17191c" stroke-width="1.3" stroke-dasharray="158.06 22.90" transform="rotate(115.99 734.7 449.3)"/><circle cx="716.8" cy="660.2" r="28.8" fill="url(#hg)"/><circle cx="716.8" cy="660.2" r="28.8" fill="none" stroke="#17191c" stroke-width="1.3" stroke-dasharray="158.06 22.90" transform="rotate(-60.64 716.8 660.2)"/></svg>
<svg style="left:0px;top:0px;" width="1716" height="1240" viewBox="0 0 1716 1240"><text x="1095.8" y="1141.4" font-size="20.5" font-weight="bold" text-anchor="middle" font-family="Liberation Sans" letter-spacing="-0.9" fill="none" stroke="#2a3340" stroke-width="2.2" stroke-linejoin="round">1 Å</text><text x="1095.8" y="1141.4" font-size="20.5" font-weight="bold" text-anchor="middle" font-family="Liberation Sans" letter-spacing="-0.9" fill="#fff">1 Å</text></svg>
<div style="left:1035px;top:1161.5px;width:120px;height:4.5px;background:#fff;border:1px solid #2a3340;"></div>
<div style="left:511px;top:1175px;width:496px;height:32px;background:#2f3d52;border-radius:4px;"></div>
<div style="left:728px;top:1175px;width:31px;height:32px;background:#4d5f78;"></div>
<svg style="left:514px;top:1179px;" width="25" height="25" viewBox="0 0 25 25"><defs><radialGradient id="mz514" cx="40%" cy="35%"><stop offset="0" stop-color="#d3e3f6"/><stop offset="1" stop-color="#96b9e2"/></radialGradient></defs><rect x="0.6" y="0.6" width="23" height="23" rx="1" fill="none" stroke="#9dbfe8" stroke-width="1.3"/><path d="M15.425 15.825000000000001 L20.025 20.425" stroke="#3a3f46" stroke-width="3.8" stroke-linecap="round"/><path d="M15.425 15.825000000000001 L20.025 20.425" stroke="#f2f4f7" stroke-width="2.3" stroke-linecap="round"/><circle cx="11" cy="11.4" r="7.300000000000001" fill="#3a3f46"/><circle cx="11" cy="11.4" r="5.9" fill="url(#mz514)" stroke="#eef1f5" stroke-width="1.6"/></svg>
<svg style="left:545.5px;top:1179px;" width="25" height="25" viewBox="0 0 25 25"><defs><radialGradient id="mz545" cx="40%" cy="35%"><stop offset="0" stop-color="#d3e3f6"/><stop offset="1" stop-color="#96b9e2"/></radialGradient></defs><path d="M-0.2 7.6 V0.6 H6.8 M16.8 0.6 H23.8 V7.6 M23.8 16.6 V23.6 H16.8 M6.8 23.6 H-0.2 V16.6" fill="none" stroke="#9dbfe8" stroke-width="1.3"/><path d="M15.425 15.825000000000001 L20.025 20.425" stroke="#3a3f46" stroke-width="3.8" stroke-linecap="round"/><path d="M15.425 15.825000000000001 L20.025 20.425" stroke="#f2f4f7" stroke-width="2.3" stroke-linecap="round"/><circle cx="11" cy="11.4" r="7.300000000000001" fill="#3a3f46"/><circle cx="11" cy="11.4" r="5.9" fill="url(#mz545)" stroke="#eef1f5" stroke-width="1.6"/></svg>
<svg style="left:575.8px;top:1179px;" width="25" height="25" viewBox="0 0 25 25"><defs><radialGradient id="mz575" cx="40%" cy="35%"><stop offset="0" stop-color="#d3e3f6"/><stop offset="1" stop-color="#96b9e2"/></radialGradient></defs><path d="M15.425 15.825000000000001 L20.025 20.425" stroke="#3a3f46" stroke-width="3.8" stroke-linecap="round"/><path d="M15.425 15.825000000000001 L20.025 20.425" stroke="#f2f4f7" stroke-width="2.3" stroke-linecap="round"/><circle cx="11" cy="11.4" r="7.300000000000001" fill="#3a3f46"/><circle cx="11" cy="11.4" r="5.9" fill="url(#mz575)" stroke="#eef1f5" stroke-width="1.6"/><path d="M7.8 11.4 H14.2 M11 8.2 V14.600000000000001" stroke="#fff" stroke-width="2"/></svg>
<svg style="left:607.3px;top:1179px;" width="25" height="25" viewBox="0 0 25 25"><defs><radialGradient id="mz607" cx="40%" cy="35%"><stop offset="0" stop-color="#d3e3f6"/><stop offset="1" stop-color="#96b9e2"/></radialGradient></defs><path d="M15.425 15.825000000000001 L20.025 20.425" stroke="#3a3f46" stroke-width="3.8" stroke-linecap="round"/><path d="M15.425 15.825000000000001 L20.025 20.425" stroke="#f2f4f7" stroke-width="2.3" stroke-linecap="round"/><circle cx="11" cy="11.4" r="7.300000000000001" fill="#3a3f46"/><circle cx="11" cy="11.4" r="5.9" fill="url(#mz607)" stroke="#eef1f5" stroke-width="1.6"/><path d="M7.8 11.4 H14.2" stroke="#fff" stroke-width="2"/></svg>
<svg style="left:638px;top:1179px;" width="24" height="23" viewBox="0 0 24 23"><defs><linearGradient id="gs" x1="0" y1="0" x2="0" y2="1"><stop offset="0" stop-color="#53677e"/><stop offset="1" stop-color="#93b6de"/></linearGradient></defs><rect x="0.5" y="0.5" width="23" height="22" rx="2" fill="url(#gs)" stroke="#1d2838" stroke-width="1"/></svg>
<svg style="left:668px;top:1178px;" width="26" height="26" viewBox="0 0 26 26"><path d="M13 0.8 L22.5 4.2 L25.2 14 L21.5 22.5 L13 25.4 L4.5 22.5 L0.8 14 L3.5 4.2Z" fill="#4a80c2" stroke="#2d5a94" stroke-width=".6"/><path d="M13 0.8 L22.5 4.2 L18.2 9 H7.8 L3.5 4.2Z" fill="#6b9eda"/><path d="M3.5 4.2 L7.8 9 L6.5 17.5 L0.8 14Z" fill="#5a8ed0"/><path d="M22.5 4.2 L18.2 9 L19.5 17.5 L25.2 14Z" fill="#3f72b2"/><path d="M7.8 9 H18.2 L19.5 17.5 L13 21.5 L6.5 17.5Z" fill="#5587c8"/><path d="M11.2 14 h3.6 v5.5 l-1.8 1.6 l-1.8 -1.6Z" fill="#6b9eda"/><path d="M6.6 13 L10 10.6 V15.4Z M19.4 13 L16 10.6 V15.4Z" fill="#0f1724"/><path d="M11.3 3.2 H14.7 M13 2.4 V5.6" stroke="#3d74bd" stroke-width="1.1"/><path d="M1.3 22 L5.2 19" stroke="#e2572e" stroke-width="2.4"/><path d="M24.7 22 L20.8 19" stroke="#3cc45a" stroke-width="2.4"/></svg>
<svg style="left:700px;top:1180px;" width="24" height="22" viewBox="0 0 24 22"><path d="M3.2 1 H20.8 L23 20.5 H1Z" fill="#a9bfd1" stroke="#93a8ba" stroke-width=".6"/><path d="M1.8 10 H22.2" stroke="#d98a86" stroke-width=".8"/><path d="M12 1 V21" stroke="#7fc99a" stroke-width=".8"/><path d="M6.5 1 L5.3 21 M17.5 1 L18.7 21 M2.5 5.5 H21.5 M1.2 15.5 H22.8" stroke="#95abc0" stroke-width=".5"/></svg>
<svg style="left:731px;top:1178px;" width="24" height="26" viewBox="0 0 24 26"><text x="11.8" y="18.9" font-size="18" text-anchor="middle" font-family="Liberation Sans" letter-spacing="-1.3" fill="none" stroke="#1d2838" stroke-width="2.4" stroke-linejoin="round">1Å</text><text x="11.8" y="18.9" font-size="18" text-anchor="middle" font-family="Liberation Sans" letter-spacing="-1.3" fill="#fff" stroke="#fff" stroke-width=".7">1Å</text><path d="M1.5 21.9 H22.5" stroke="#1d2838" stroke-width="3.4"/><path d="M2 21.9 H22" stroke="#fff" stroke-width="1.8"/></svg>
<svg style="left:762px;top:1179px;" width="24" height="24" viewBox="0 0 24 24"><path d="M7 3 H9 L10 1.5 H14 L15 3 H17 V8.5 H7Z" fill="#a6c8ee" stroke="#1d2838" stroke-width=".5"/><circle cx="12" cy="5.8" r="1.8" fill="#e9eef4" stroke="#55657b" stroke-width=".6"/><ellipse cx="12" cy="17" rx="9.7" ry="4.3" fill="none" stroke="#1d2838" stroke-width="3.2"/><ellipse cx="12" cy="17" rx="9.7" ry="4.3" fill="none" stroke="#fff" stroke-width="2"/><path d="M10 19.5 L13.5 21.3 L10 23Z" fill="#fff"/></svg>
<svg style="left:793px;top:1179px;" width="24" height="24" viewBox="0 0 24 24"><g transform="translate(12 12) rotate(50)" fill="#78abe8" stroke="#a3c8f2" stroke-width=".9" stroke-linejoin="round"><g transform="rotate(0)"><path d="M-3.9 -2 L-4.5 -11.6 L0 -10.2 L4.5 -11.6 L3.9 -2Z"/></g><g transform="rotate(90)"><path d="M-3.9 -2 L-4.5 -11.6 L0 -10.2 L4.5 -11.6 L3.9 -2Z"/></g><g transform="rotate(180)"><path d="M-3.9 -2 L-4.5 -11.6 L0 -10.2 L4.5 -11.6 L3.9 -2Z"/></g><g transform="rotate(270)"><path d="M-3.9 -2 L-4.5 -11.6 L0 -10.2 L4.5 -11.6 L3.9 -2Z"/></g><circle r="3.8" stroke="none"/></g><circle cx="12" cy="12" r="1.3" fill="#111a28"/></svg>
<svg style="left:825px;top:1179px;" width="24" height="24" viewBox="0 0 24 24"><path d="M1 5 H4.5 L5.5 2.5 H12.5 L13.5 5 H18 V15.5 H1Z" fill="#a6c8ee" stroke="#1d2838" stroke-width=".6"/><circle cx="8.5" cy="9.5" r="3.6" fill="#55657b" stroke="#d3a24a" stroke-width=".7"/><circle cx="8.5" cy="9.5" r="1.8" fill="#c9d3df"/><path d="M10 10 H20 L22.5 12.5 V23 H10Z" fill="#6f9bd0" stroke="#1d2838" stroke-width=".7"/><rect x="13" y="10.5" width="6" height="4.5" fill="#3b4d66"/><rect x="12" y="17.5" width="8.5" height="5" fill="#f0ecd6"/></svg>
<svg style="left:854px;top:1178.5px;" width="24" height="25" viewBox="0 0 24 25"><rect x="9" y="2.5" width="14" height="12.8" fill="#7aa6de" stroke="#a9c9ee" stroke-width=".8"/><path d="M11 5.5 H21 M11 8.3 H21 M11 11.1 H21" stroke="#a9c9ee" stroke-width="1"/><circle cx="5.8" cy="19.5" r="2.8" fill="#d9d9d9" stroke="#8a8a8a" stroke-width=".5"/></svg>
<svg style="left:887.5px;top:1181.5px;" width="21" height="19" viewBox="0 0 21 19"><rect x="0.5" y="0.5" width="20" height="18" fill="#6d9ad6" stroke="#a9c9ee" stroke-width=".8"/><path d="M2 3.3 H19 M2 12.6 H19 M2 15.4 H19" stroke="#a9c9ee" stroke-width="1"/></svg>
<svg style="left:918px;top:1179px;" width="24" height="24" viewBox="0 0 24 24"><defs><radialGradient id="ae1" cx="38%" cy="30%" r="75%"><stop offset="0" stop-color="#eaf2fb"/><stop offset="1" stop-color="#6f9bd0"/></radialGradient></defs><circle cx="6.5" cy="5.5" r="4" fill="url(#ae1)" stroke="#2c3d55" stroke-width=".5"/><circle cx="14.5" cy="9.5" r="3.6" fill="url(#ae1)" stroke="#2c3d55" stroke-width=".5"/><circle cx="6.5" cy="15.5" r="4" fill="url(#ae1)" stroke="#2c3d55" stroke-width=".5"/><path d="M8.200000000000001 17.3 Q13.8 10.5 19.4 17.3 Q13.8 24.1 8.200000000000001 17.3Z" fill="#aab6c6" stroke="#1d2838" stroke-width="1.2"/><circle cx="13.8" cy="17.3" r="2.448" fill="#1d2838"/><circle cx="13.8" cy="17.3" r="0.9520000000000001" fill="#aab6c6"/><path d="M18 21 H23 L20.5 23.8Z" fill="#fff"/></svg>
<svg style="left:949px;top:1184px;" width="22" height="14" viewBox="0 0 22 14"><path d="M1 7 Q11 -4.5 21 7 Q11 18.5 1 7Z" fill="#f2f5f9" stroke="#1d2838" stroke-width="1"/><circle cx="11" cy="7" r="4.6" fill="#1d2838"/><circle cx="11" cy="7" r="2" fill="#cfe0f5"/></svg>
<svg style="left:984px;top:1182px;" width="15" height="18" viewBox="0 0 15 18"><path d="M1 1 L14 9 L1 17Z" fill="#fff" stroke="#3a3f46" stroke-width=".8" stroke-linejoin="round"/></svg>
<svg style="left:1215px;top:155px;" width="22" height="24" viewBox="0 0 22 24"><rect x="1" y="1" width="16.5" height="19" rx="1" fill="#41597a" stroke="#cfe0f5" stroke-width="1.4"/><path d="M4.5 5.5 H14 M4.5 9 H14 M4.5 12.5 H9" stroke="#e9eef4" stroke-width="1.5"/><path d="M15.5 17.5 L20 22" stroke="#e9eef4" stroke-width="2.4" stroke-linecap="round"/><circle cx="13" cy="15" r="4" fill="#9dbfe8" stroke="#d8dde4" stroke-width="1.3"/></svg>
<div style="left:1249.00px;top:159.94px;line-height:16px;font-size:12px;color:#e9eef4;white-space:pre;font-weight:bold;letter-spacing:-0.126px;">Inspector</div>
<svg style="left:1668.9px;top:160.9px;" width="16" height="12" viewBox="0 0 16 12"><path d="M0.3 6 L7.6 4.8 V1.8 L8.6 0.7 L10.2 2.3 H13 L14 1.1 H15.2 V10.9 H14 L13 9.7 H10.2 L8.6 11.3 L7.6 10.2 V7.2 Z" fill="#6f9ed4" stroke="#2a3a53" stroke-width="1" stroke-linejoin="round"/></svg>
<svg style="left:1689.2px;top:160.2px;" width="13.6" height="13.6" viewBox="0 0 13.6 13.6"><path d="M1.4 1.4 L12.2 12.2 M12.2 1.4 L1.4 12.2" stroke="#2a3a53" stroke-width="3.4" stroke-linecap="round"/><path d="M1.4 1.4 L12.2 12.2 M12.2 1.4 L1.4 12.2" stroke="#6f9ed4" stroke-width="1.9" stroke-linecap="round"/></svg>
<div style="left:1216px;top:185px;width:491px;height:26px;background:#fff;"></div>
<div style="left:1222.00px;top:190.94px;line-height:16px;font-size:12px;color:#7b7b7b;white-space:pre;letter-spacing:-0.019px;">Filter attributes... (Ctrl+i)</div>
<svg style="left:1685px;top:189px;" width="18" height="18" viewBox="0 0 18 18"><defs><radialGradient id="mg1685" cx="40%" cy="35%"><stop offset="0" stop-color="#cfe0f5"/><stop offset="1" stop-color="#6f9bd0"/></radialGradient></defs><path d="M11.5 11.5 L16.5 16.5" stroke="#8a8f96" stroke-width="3.2" stroke-linecap="round"/><path d="M11.5 11.5 L16.5 16.5" stroke="#e3e6ea" stroke-width="1.4" stroke-linecap="round"/><circle cx="7.5" cy="7.5" r="6" fill="url(#mg1685)" stroke="#9aa0a8" stroke-width="1.6"/></svg>
<div style="left:1215px;top:213px;width:493px;height:43px;background:#64799a;"></div>
<div style="left:1215px;top:256px;width:493px;height:1px;background:#2b384c;"></div>
<div style="left:1219px;top:233.5px;width:8px;height:1.6px;background:#cfd8e4;"></div>
<svg style="left:1232px;top:221px;" width="30.0" height="28.0" viewBox="0 0 30 28"><defs><linearGradient id="ug1232_221" x1="0" y1="0" x2="0" y2="1"><stop offset="0" stop-color="#ffffff"/><stop offset=".3" stop-color="#f4f9fe"/><stop offset=".5" stop-color="#9ccbf0"/><stop offset="1" stop-color="#86bce8"/></linearGradient></defs><path d="M3.3 22.3 C1.6 18.5 0.9 15.5 1.2 13.2 C2 6 6.8 1.1 12.2 1.1 C17 1.1 20.5 3.5 23 7.3 L28.2 4.2 L26 17.9 L12.4 14.8 L17.2 11.3 C15.6 9 13.6 7.9 11.3 7.9 C8 7.9 5.8 10.5 5.8 13.6 C5.7 16.2 5.2 19.2 4.3 22 Z" fill="url(#ug1232_221)" stroke="#10161f" stroke-width="1.5" stroke-linejoin="round"/><circle cx="11.3" cy="22.7" r="3.6" fill="#a6c8ee" stroke="#10161f" stroke-width="1.4"/></svg>
<div style="left:1266.50px;top:228.44px;line-height:16px;font-size:12px;color:#e9eef4;white-space:pre;font-weight:bold;letter-spacing:-0.008px;">Interactive modeling (1)</div>
<div style="left:1215px;top:258px;width:493px;height:27px;background:#53688a;"></div>
<div style="left:1235px;top:271px;width:8px;height:1.6px;background:#cfd8e4;"></div>
<div style="left:1250.00px;top:264.94px;line-height:16px;font-size:12px;color:#e9eef4;white-space:pre;letter-spacing:-0.336px;">Parameters</div>
<div style="left:1229.70px;top:289.44px;line-height:16px;font-size:12px;color:#e9eef4;white-space:pre;letter-spacing:-0.256px;">Current step size</div>
<div style="left:1327.00px;top:289.44px;line-height:16px;font-size:12px;color:#e9eef4;white-space:pre;letter-spacing:-0.470px;">0.5 fs</div>
<div style="left:1228.80px;top:312.44px;line-height:16px;font-size:12px;color:#e9eef4;white-space:pre;letter-spacing:-0.038px;">Number of steps</div>
<div style="left:1271.50px;top:339.44px;line-height:16px;font-size:12px;color:#e9eef4;white-space:pre;letter-spacing:-0.570px;">Step size</div>
<div style="left:1327px;top:307px;width:381px;height:26px;background:#fff;"></div>
<div style="left:1689px;top:308px;width:18px;height:24px;background:#4e7bb0;"></div>
<svg style="left:1695px;top:312.5px;" width="6" height="5" viewBox="0 0 6 5"><path d="M3 0 L6 5 H0Z" fill="#dbe7f5"/></svg>
<svg style="left:1695px;top:322.5px;" width="6" height="5" viewBox="0 0 6 5"><path d="M3 5 L6 0 H0Z" fill="#dbe7f5"/></svg>
<div style="left:1333.00px;top:313.24px;line-height:16px;font-size:12px;color:#111;white-space:pre;">20</div>
<div style="left:1327px;top:334px;width:381px;height:26px;background:#fff;"></div>
<div style="left:1689px;top:335px;width:18px;height:24px;background:#4e7bb0;"></div>
<svg style="left:1695px;top:339.5px;" width="6" height="5" viewBox="0 0 6 5"><path d="M3 0 L6 5 H0Z" fill="#dbe7f5"/></svg>
<svg style="left:1695px;top:349.5px;" width="6" height="5" viewBox="0 0 6 5"><path d="M3 5 L6 0 H0Z" fill="#dbe7f5"/></svg>
<div style="left:1333.00px;top:340.24px;line-height:16px;font-size:12px;color:#111;white-space:pre;letter-spacing:-0.571px;">0.5000 fs</div>
<svg style="left:1210px;top:436px;" width="29" height="27" viewBox="0 0 29 27"><circle cx="13.9" cy="5.9" r="5.9" fill="#12a812"/><rect x="10.7" y="2.7" width="1.8" height="1.8" fill="#6fe06f" opacity=".75"/><circle cx="13.9" cy="14.6" r="5.9" fill="#ffd21e"/><rect x="10.7" y="11.399999999999999" width="1.8" height="1.8" fill="#dff3ff" opacity=".75"/><circle cx="6" cy="19" r="5.9" fill="#d92b24"/><rect x="2.8" y="15.8" width="1.8" height="1.8" fill="#f08a84" opacity=".75"/><circle cx="22" cy="19" r="5.9" fill="#0a93b8"/><rect x="18.8" y="15.8" width="1.8" height="1.8" fill="#9fb8ff" opacity=".75"/></svg>
<div style="left:1249.00px;top:442.44px;line-height:16px;font-size:12px;color:#e9eef4;white-space:pre;font-weight:bold;letter-spacing:-0.294px;">Universal Force Field</div>
<div style="left:1653.11px;top:442.46px;line-height:16px;font-size:14px;color:#6f9bd0;white-space:pre;">?</div>
<svg style="left:1668.9px;top:442.9px;" width="16" height="12" viewBox="0 0 16 12"><path d="M0.3 6 L7.6 4.8 V1.8 L8.6 0.7 L10.2 2.3 H13 L14 1.1 H15.2 V10.9 H14 L13 9.7 H10.2 L8.6 11.3 L7.6 10.2 V7.2 Z" fill="#6f9ed4" stroke="#2a3a53" stroke-width="1" stroke-linejoin="round"/></svg>
<svg style="left:1689.2px;top:442.7px;" width="13.6" height="13.6" viewBox="0 0 13.6 13.6"><path d="M1.4 1.4 L12.2 12.2 M12.2 1.4 L1.4 12.2" stroke="#2a3a53" stroke-width="3.4" stroke-linecap="round"/><path d="M1.4 1.4 L12.2 12.2 M12.2 1.4 L1.4 12.2" stroke="#6f9ed4" stroke-width="1.9" stroke-linecap="round"/></svg>
<div style="left:1221.5px;top:488px;width:480px;height:344.5px;border:2px solid #3c4b62;"></div>
<div style="left:1220px;top:486px;width:67px;height:6px;background:#2f3d52;"></div>
<div style="left:1223.00px;top:478.44px;line-height:16px;font-size:12px;color:#e9eef4;white-space:pre;letter-spacing:-0.041px;">Perception</div>
<div style="left:1232.5px;top:514.5px;width:457.5px;height:47px;border:2px solid #3c4b62;"></div>
<div style="left:1231px;top:512.5px;width:104px;height:6px;background:#2f3d52;"></div>
<div style="left:1234.00px;top:504.44px;line-height:16px;font-size:12px;color:#e9eef4;white-space:pre;letter-spacing:0.174px;">Max coordination</div>
<div style="left:1244px;top:526px;width:50px;height:24px;background:#4e7bb0;"></div>
<div style="left:1260.59px;top:530.74px;line-height:16px;font-size:12px;color:#e9eef4;white-space:pre;letter-spacing:-0.600px;">Set</div>
<div style="left:1599px;top:526px;width:80px;height:24px;background:#4e7bb0;"></div>
<div style="left:1617.50px;top:530.74px;line-height:16px;font-size:12px;color:#e9eef4;white-space:pre;letter-spacing:-0.461px;">Reset all</div>
<div style="left:1232.5px;top:583.5px;width:457.5px;height:47px;border:2px solid #3c4b62;"></div>
<div style="left:1231px;top:581.5px;width:76px;height:6px;background:#2f3d52;"></div>
<div style="left:1234.00px;top:573.44px;line-height:16px;font-size:12px;color:#e9eef4;white-space:pre;letter-spacing:-0.137px;">Max valence</div>
<div style="left:1244px;top:595px;width:50px;height:24px;background:#4e7bb0;"></div>
<div style="left:1260.59px;top:599.74px;line-height:16px;font-size:12px;color:#e9eef4;white-space:pre;letter-spacing:-0.600px;">Set</div>
<div style="left:1599px;top:595px;width:80px;height:24px;background:#4e7bb0;"></div>
<div style="left:1617.50px;top:599.74px;line-height:16px;font-size:12px;color:#e9eef4;white-space:pre;letter-spacing:-0.461px;">Reset all</div>
<div style="left:1232.5px;top:652.5px;width:457.5px;height:47px;border:2px solid #3c4b62;"></div>
<div style="left:1231px;top:650.5px;width:69px;height:6px;background:#2f3d52;"></div>
<div style="left:1234.00px;top:642.44px;line-height:16px;font-size:12px;color:#e9eef4;white-space:pre;letter-spacing:-0.041px;">Bond order</div>
<div style="left:1244px;top:664px;width:50px;height:24px;background:#4e7bb0;"></div>
<div style="left:1260.59px;top:668.74px;line-height:16px;font-size:12px;color:#e9eef4;white-space:pre;letter-spacing:-0.600px;">Set</div>
<div style="left:1599px;top:664px;width:80px;height:24px;background:#4e7bb0;"></div>
<div style="left:1617.50px;top:668.74px;line-height:16px;font-size:12px;color:#e9eef4;white-space:pre;letter-spacing:-0.461px;">Reset all</div>
<div style="left:1232.5px;top:721.5px;width:457.5px;height:47px;border:2px solid #3c4b62;"></div>
<div style="left:1231px;top:719.5px;width:63px;height:6px;background:#2f3d52;"></div>
<div style="left:1234.00px;top:711.44px;line-height:16px;font-size:12px;color:#e9eef4;white-space:pre;letter-spacing:-0.114px;">Typization</div>
<div style="left:1244px;top:733px;width:50px;height:24px;background:#4e7bb0;"></div>
<div style="left:1260.59px;top:737.74px;line-height:16px;font-size:12px;color:#e9eef4;white-space:pre;letter-spacing:-0.600px;">Set</div>
<div style="left:1599px;top:733px;width:80px;height:24px;background:#4e7bb0;"></div>
<div style="left:1617.50px;top:737.74px;line-height:16px;font-size:12px;color:#e9eef4;white-space:pre;letter-spacing:-0.461px;">Reset all</div>
<div style="left:1300px;top:525px;width:80px;height:26px;background:#fff;"></div>
<div style="left:1304.50px;top:530.94px;line-height:16px;font-size:12px;color:#111;white-space:pre;">0</div>
<svg style="left:1355px;top:533.5px;" width="13" height="9.5" viewBox="0 0 13 9.5"><path d="M0 0 H13 L6.5 9.5Z" fill="#4e7bb0"/></svg>
<div style="left:1300px;top:594px;width:80px;height:26px;background:#fff;"></div>
<div style="left:1304.50px;top:599.94px;line-height:16px;font-size:12px;color:#111;white-space:pre;">1</div>
<svg style="left:1355px;top:602.5px;" width="13" height="9.5" viewBox="0 0 13 9.5"><path d="M0 0 H13 L6.5 9.5Z" fill="#4e7bb0"/></svg>
<div style="left:1300px;top:663px;width:80px;height:26px;background:#fff;"></div>
<div style="left:1361px;top:664px;width:18px;height:24px;background:#4e7bb0;"></div>
<svg style="left:1367.0px;top:668.5px;" width="6" height="5" viewBox="0 0 6 5"><path d="M3 0 L6 5 H0Z" fill="#dbe7f5"/></svg>
<svg style="left:1367.0px;top:678.5px;" width="6" height="5" viewBox="0 0 6 5"><path d="M3 5 L6 0 H0Z" fill="#dbe7f5"/></svg>
<div style="left:1338.50px;top:668.94px;line-height:16px;font-size:12px;color:#111;white-space:pre;letter-spacing:-0.591px;">1.0</div>
<div style="left:1386px;top:664px;width:80px;height:24px;background:#4e7bb0;"></div>
<div style="left:1408.83px;top:668.74px;line-height:16px;font-size:12px;color:#e9eef4;white-space:pre;letter-spacing:-0.600px;">Freeze</div>
<div style="left:1300px;top:732px;width:80px;height:26px;background:#fff;"></div>
<div style="left:1304.50px;top:737.94px;line-height:16px;font-size:12px;color:#111;white-space:pre;">H_</div>
<svg style="left:1355px;top:740.5px;" width="13" height="9.5" viewBox="0 0 13 9.5"><path d="M0 0 H13 L6.5 9.5Z" fill="#4e7bb0"/></svg>
<div style="left:1386px;top:733px;width:80px;height:24px;background:#4e7bb0;"></div>
<div style="left:1408.83px;top:737.74px;line-height:16px;font-size:12px;color:#e9eef4;white-space:pre;letter-spacing:-0.600px;">Freeze</div>
<div style="left:1233px;top:775.3px;width:457px;height:23.5px;background:#4e7bb0;"></div>
<div style="left:1416.50px;top:779.79px;line-height:16px;font-size:12px;color:#e9eef4;white-space:pre;letter-spacing:-0.253px;">Reset  perception</div>
<div style="left:1235px;top:807px;width:14px;height:14px;background:#fff;"></div>
<svg style="left:1235px;top:807px;" width="14" height="14" viewBox="0 0 14 14"><path d="M1 5.9 L5.6 11.3 L13.4 2.8" fill="none" stroke="#3f73b3" stroke-width="1.9"/></svg>
<div style="left:1257.50px;top:807.44px;line-height:16px;font-size:12px;color:#e9eef4;white-space:pre;letter-spacing:-0.104px;">Enable perception warnings</div>
<div style="left:1221.5px;top:855px;width:480px;height:155px;border:2px solid #3c4b62;"></div>
<div style="left:1220px;top:853px;width:52px;height:6px;background:#2f3d52;"></div>
<div style="left:1223.00px;top:845.44px;line-height:16px;font-size:12px;color:#e9eef4;white-space:pre;letter-spacing:-0.194px;">Settings</div>
<div style="left:1233.00px;top:872.44px;line-height:16px;font-size:12px;color:#e9eef4;white-space:pre;letter-spacing:-0.034px;">Bond stretch</div>
<div style="left:1551.5px;top:872.5px;width:14px;height:14px;background:#fff;border-radius:50%;"></div>
<div style="left:1553.5px;top:874.5px;width:10px;height:10px;background:#4e7bb0;border-radius:50%;"></div>
<div style="left:1574.00px;top:872.44px;line-height:16px;font-size:12px;color:#e9eef4;white-space:pre;letter-spacing:0.236px;">Harmonic</div>
<div style="left:1635px;top:872.5px;width:14px;height:14px;background:#fff;border-radius:50%;"></div>
<div style="left:1657.50px;top:872.44px;line-height:16px;font-size:12px;color:#e9eef4;white-space:pre;letter-spacing:-0.085px;">Morse</div>
<div style="left:1233.00px;top:904.44px;line-height:16px;font-size:12px;color:#e9eef4;white-space:pre;letter-spacing:-0.097px;">Van der Waals cutoff</div>
<div style="left:1610px;top:898.3px;width:80px;height:26px;background:#fff;"></div>
<div style="left:1671px;top:899.3px;width:18px;height:24px;background:#4e7bb0;"></div>
<svg style="left:1677.0px;top:903.8px;" width="6" height="5" viewBox="0 0 6 5"><path d="M3 0 L6 5 H0Z" fill="#dbe7f5"/></svg>
<svg style="left:1677.0px;top:913.8px;" width="6" height="5" viewBox="0 0 6 5"><path d="M3 5 L6 0 H0Z" fill="#dbe7f5"/></svg>
<div style="left:1637.20px;top:904.24px;line-height:16px;font-size:12px;color:#111;white-space:pre;letter-spacing:-0.389px;">8.0 A</div>
<div style="left:1233.00px;top:939.44px;line-height:16px;font-size:12px;color:#e9eef4;white-space:pre;letter-spacing:0.007px;">Switching distance</div>
<div style="left:1610px;top:933.3px;width:80px;height:26px;background:#fff;"></div>
<div style="left:1671px;top:934.3px;width:18px;height:24px;background:#4e7bb0;"></div>
<svg style="left:1677.0px;top:938.8px;" width="6" height="5" viewBox="0 0 6 5"><path d="M3 0 L6 5 H0Z" fill="#dbe7f5"/></svg>
<svg style="left:1677.0px;top:948.8px;" width="6" height="5" viewBox="0 0 6 5"><path d="M3 5 L6 0 H0Z" fill="#dbe7f5"/></svg>
<div style="left:1637.20px;top:939.24px;line-height:16px;font-size:12px;color:#111;white-space:pre;letter-spacing:-0.389px;">6.0 A</div>
<div style="left:1233.00px;top:974.44px;line-height:16px;font-size:12px;color:#e9eef4;white-space:pre;letter-spacing:0.079px;">Periodicity of neighbor lists construction</div>
<div style="left:1610px;top:968.3px;width:80px;height:26px;background:#fff;"></div>
<div style="left:1671px;top:969.3px;width:18px;height:24px;background:#4e7bb0;"></div>
<svg style="left:1677.0px;top:973.8px;" width="6" height="5" viewBox="0 0 6 5"><path d="M3 0 L6 5 H0Z" fill="#dbe7f5"/></svg>
<svg style="left:1677.0px;top:983.8px;" width="6" height="5" viewBox="0 0 6 5"><path d="M3 5 L6 0 H0Z" fill="#dbe7f5"/></svg>
<div style="left:1655.33px;top:974.24px;line-height:16px;font-size:12px;color:#111;white-space:pre;">1</div>
<div style="left:1221.5px;top:1031px;width:480px;height:154px;border:2px solid #3c4b62;"></div>
<div style="left:1220px;top:1029px;width:77px;height:6px;background:#2f3d52;"></div>
<div style="left:1223.00px;top:1021.44px;line-height:16px;font-size:12px;color:#e9eef4;white-space:pre;letter-spacing:-0.517px;">UFF energies</div>
<div style="left:1233.00px;top:1044.44px;line-height:16px;font-size:12px;color:#e9eef4;white-space:pre;letter-spacing:-0.144px;">Bond energy:</div>
<div style="left:1595.80px;top:1044.44px;line-height:16px;font-size:12px;color:#e9eef4;white-space:pre;letter-spacing:-0.218px;">8.60163 kJ.mol^-1</div>
<div style="left:1233.00px;top:1067.44px;line-height:16px;font-size:12px;color:#e9eef4;white-space:pre;letter-spacing:-0.075px;">Angle bend energy:</div>
<div style="left:1572.60px;top:1067.44px;line-height:16px;font-size:12px;color:#e9eef4;white-space:pre;letter-spacing:-0.215px;">4.30106e-07 kJ.mol^-1</div>
<div style="left:1233.00px;top:1090.44px;line-height:16px;font-size:12px;color:#e9eef4;white-space:pre;letter-spacing:-0.167px;">Torsion energy:</div>
<div style="left:1628.80px;top:1090.44px;line-height:16px;font-size:12px;color:#e9eef4;white-space:pre;letter-spacing:0.022px;">0 kJ.mol^-1</div>
<div style="left:1233.00px;top:1113.44px;line-height:16px;font-size:12px;color:#e9eef4;white-space:pre;letter-spacing:-0.153px;">Inversion energy:</div>
<div style="left:1628.80px;top:1113.44px;line-height:16px;font-size:12px;color:#e9eef4;white-space:pre;letter-spacing:0.022px;">0 kJ.mol^-1</div>
<div style="left:1233.00px;top:1136.44px;line-height:16px;font-size:12px;color:#e9eef4;white-space:pre;letter-spacing:-0.301px;">Van der Waals energy:</div>
<div style="left:1628.80px;top:1136.44px;line-height:16px;font-size:12px;color:#e9eef4;white-space:pre;letter-spacing:0.022px;">0 kJ.mol^-1</div>
<div style="left:1233.00px;top:1158.94px;line-height:16px;font-size:12px;color:#e9eef4;white-space:pre;font-weight:bold;letter-spacing:-0.555px;">Total energy:</div>
<div style="left:1595.80px;top:1158.94px;line-height:16px;font-size:12px;color:#e9eef4;white-space:pre;letter-spacing:-0.218px;">8.60163 kJ.mol^-1</div>
</body></html>
